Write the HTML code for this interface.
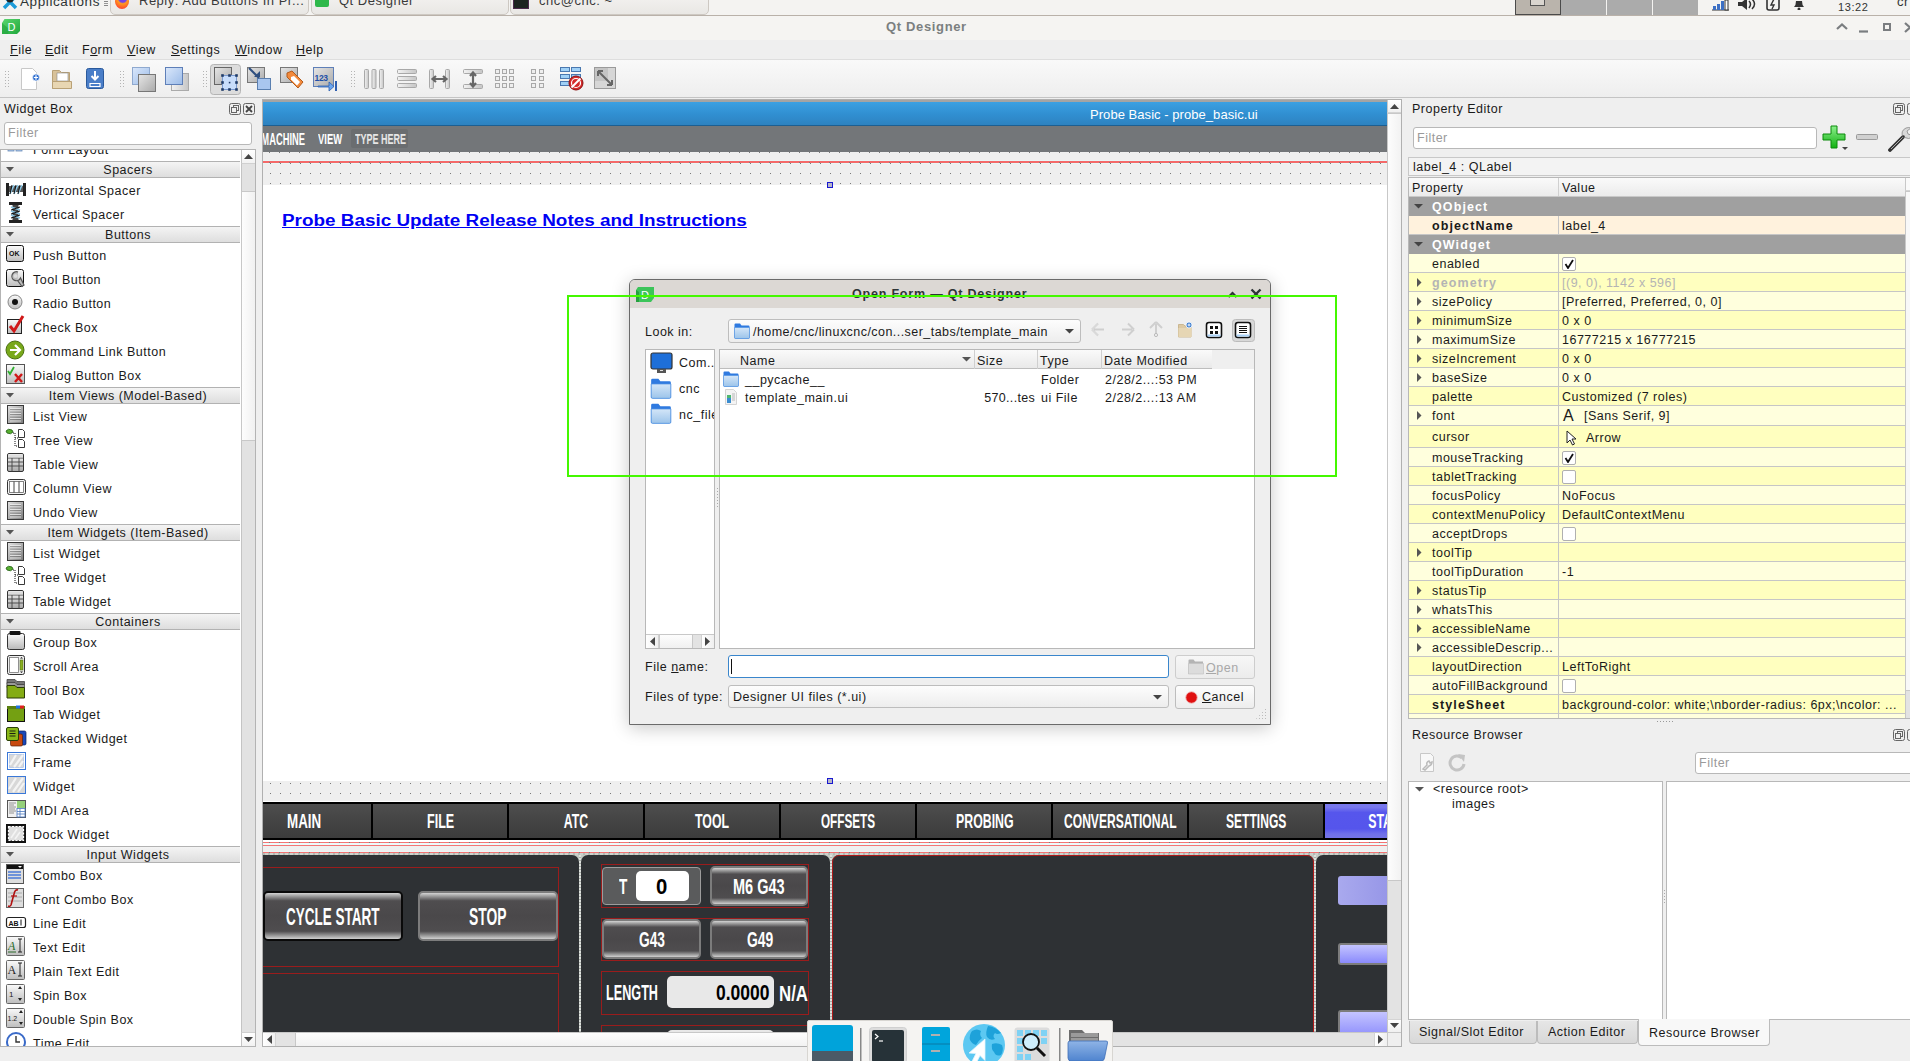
<!DOCTYPE html>
<html><head><meta charset="utf-8">
<style>
*{box-sizing:border-box;margin:0;padding:0}
html,body{width:1910px;height:1061px;overflow:hidden;background:#efefef;font-family:"Liberation Sans",sans-serif;font-size:12.5px;color:#1a1a1a;letter-spacing:0.5px}
.a{position:absolute}
.t{position:absolute;white-space:nowrap;line-height:14px}
.b{font-weight:bold;letter-spacing:1.1px}
.cond{font-weight:bold;letter-spacing:0;transform-origin:0 0;color:#fff}
</style></head><body>

<!-- ============ TASKBAR ============ -->
<div class="a" style="left:0;top:0;width:1910px;height:16px;background:#f4f3f1;border-bottom:1px solid #b9b1a9;overflow:hidden">
  <svg class="a" style="left:2px;top:-6px" width="16" height="16" viewBox="0 0 16 16"><path d="M2 2 L8 8 L14 2 M8 8 L2 14 M8 8 L14 14" stroke="#1c9bd8" stroke-width="3.5" fill="none"/><circle cx="8" cy="5" r="3.5" fill="#222"/></svg>
  <div class="t" style="left:20px;top:-5.5px;font-size:13.5px;color:#2e3436;letter-spacing:0.6px">Applications</div>
  <div class="a" style="left:104px;top:1px;width:4px;height:5px;border-top:1px solid #888;border-bottom:1px solid #888"></div><div class="a" style="left:104px;top:3px;width:4px;height:1px;background:#999"></div>
  <div class="a" style="left:110px;top:-4px;width:199px;height:19px;background:linear-gradient(#f2f1ef,#e9e7e4);border:1px solid #cdc8c2;border-radius:0 0 5px 5px"></div>
  <div class="a" style="left:115px;top:-6px;width:14px;height:15px;border-radius:50%;background:radial-gradient(circle at 55% 30%,#7542e5 0 28%,#ff9a1f 40%,#ff5a2a 70%,#e8226a 100%)"></div>
  <div class="t" style="left:139px;top:-6px;font-size:13px;color:#3a3a3a">Reply: Add Buttons In Pr...</div>
  <div class="a" style="left:311px;top:-4px;width:198px;height:19px;background:linear-gradient(#f2f1ef,#e9e7e4);border:1px solid #cdc8c2;border-radius:0 0 5px 5px"></div>
  <div class="a" style="left:315px;top:-3px;width:14px;height:10px;background:#2eb84a;border-radius:2px"></div>
  <div class="t" style="left:339px;top:-6px;font-size:13px;color:#3a3a3a">Qt Designer</div>
  <div class="a" style="left:510px;top:-4px;width:199px;height:19px;background:linear-gradient(#f2f1ef,#e9e7e4);border:1px solid #cdc8c2;border-radius:0 0 5px 5px"></div>
  <div class="a" style="left:513px;top:-3px;width:16px;height:12px;background:#1c2420;border:1px solid #4a2a4a"></div>
  <div class="t" style="left:539px;top:-6px;font-size:13px;color:#3a3a3a">cnc@cnc: ~</div>
  <div class="a" style="left:1515px;top:0;width:46px;height:15px;background:#bab4ac;border:1px solid #4a4a4a;border-top:none"></div>
  <div class="a" style="left:1530px;top:-2px;width:15px;height:8px;background:#d9d5cf;border:1px solid #555"></div>
  <div class="a" style="left:1561px;top:0;width:45px;height:15px;background:#ababab"></div>
  <div class="a" style="left:1607px;top:0;width:45px;height:15px;background:#ababab"></div>
  <div class="a" style="left:1653px;top:0;width:45px;height:15px;background:#ababab"></div>
  <svg class="a" style="left:1711px;top:0" width="20" height="11"><path d="M1 10h17" stroke="#333"/><rect x="2" y="6" width="3" height="4" fill="#3c6fc4"/><rect x="6" y="4" width="3" height="6" fill="#3c6fc4"/><rect x="10" y="1" width="3" height="9" fill="#3c6fc4"/><rect x="14" y="0" width="3" height="10" fill="#fff" stroke="#333" stroke-width="1"/></svg>
  <svg class="a" style="left:1738px;top:0" width="18" height="10"><path d="M0 2h4l5-4v12l-5-4H0z" fill="#333"/><path d="M11 1q3 3 0 7M14 -1q5 5 0 10" stroke="#333" stroke-width="1.5" fill="none"/></svg>
  <svg class="a" style="left:1766px;top:0" width="14" height="11"><rect x="1" y="-3" width="12" height="13" rx="2" fill="none" stroke="#333" stroke-width="1.6"/><path d="M8 -1L5 5h3l-2 4" stroke="#333" stroke-width="1.4" fill="none"/></svg>
  <svg class="a" style="left:1792px;top:0" width="14" height="10"><path d="M2 7q2-2 2-6h6q0 4 2 6z" fill="#333"/><circle cx="7" cy="9" r="1.5" fill="#333"/></svg>
  <div class="t" style="left:1838px;top:0px;font-size:11px;color:#333;letter-spacing:0.6px">13:22</div>
  <div class="t" style="left:1897px;top:-5px;font-size:13px;color:#333">cr</div>
</div>

<!-- ============ TITLE BAR ============ -->
<div class="a" style="left:0;top:16px;width:1910px;height:24px;background:#f5f4f2">
  <svg class="a" style="left:1px;top:3px" width="20" height="15" viewBox="0 0 20 15"><defs><linearGradient id="dg" x1="0" y1="0" x2="1" y2="1"><stop offset="0" stop-color="#5ad66e"/><stop offset="1" stop-color="#22a83c"/></linearGradient></defs><path d="M3.5 0h15.5v12l-3 3H1V4z" fill="url(#dg)"/><path d="M1 4l7 6-1 5H1z" fill="#26a83e" opacity="0.7"/><text x="6.5" y="12" font-family="Liberation Sans" font-size="11" fill="#fff" letter-spacing="0">D</text></svg>
  <div class="t" style="left:886px;top:4px;font-size:13px;font-weight:bold;color:#7b7f80;letter-spacing:0.65px">Qt Designer</div>
  <svg class="a" style="left:1834px;top:6px" width="76" height="12"><path d="M3 7l5-4.5 5 4.5" stroke="#7a7d80" stroke-width="2.2" fill="none"/><path d="M25 9.5h9" stroke="#7a7d80" stroke-width="2.2"/><rect x="50" y="2" width="6" height="6" stroke="#7a7d80" stroke-width="2" fill="none"/><path d="M71 1l5 4.5-5 4.5" stroke="#7a7d80" stroke-width="2.2" fill="none"/></svg>
</div>

<!-- ============ MENU BAR ============ -->
<div class="a" style="left:0;top:40px;width:1910px;height:20px;background:#efefef;border-bottom:1px solid #dedede">
  <div class="t" style="left:10px;top:3px"><u>F</u>ile</div>
  <div class="t" style="left:45px;top:3px"><u>E</u>dit</div>
  <div class="t" style="left:82px;top:3px">F<u>o</u>rm</div>
  <div class="t" style="left:127px;top:3px"><u>V</u>iew</div>
  <div class="t" style="left:171px;top:3px"><u>S</u>ettings</div>
  <div class="t" style="left:235px;top:3px"><u>W</u>indow</div>
  <div class="t" style="left:296px;top:3px"><u>H</u>elp</div>
</div>

<!-- ============ TOOLBAR ============ -->
<div class="a" id="toolbar" style="left:0;top:60px;width:1910px;height:38px;background:linear-gradient(#f9f9f9,#eeeeee);border-bottom:1px solid #c4c4c4">
<svg class="a" style="left:0;top:0" width="640" height="38" viewBox="0 60 640 38">
 <defs>
  <linearGradient id="gg" x1="0" y1="0" x2="1" y2="1"><stop offset="0" stop-color="#e6e6e6"/><stop offset="1" stop-color="#a9a9a9"/></linearGradient>
  <linearGradient id="gb" x1="0" y1="0" x2="1" y2="1"><stop offset="0" stop-color="#dbe8fb"/><stop offset="1" stop-color="#9bbbe8"/></linearGradient>
  <linearGradient id="gl" x1="0" y1="0" x2="1" y2="0"><stop offset="0" stop-color="#f2f2f2"/><stop offset="1" stop-color="#c6c6c6"/></linearGradient>
  <pattern id="dots" width="3" height="3" patternUnits="userSpaceOnUse"><rect width="1" height="1" fill="#b8b8b8"/></pattern>
 </defs>
 <rect x="5" y="71" width="1" height="1" fill="#b4b4b4"/><rect x="5" y="74" width="1" height="1" fill="#b4b4b4"/><rect x="5" y="77" width="1" height="1" fill="#b4b4b4"/><rect x="5" y="80" width="1" height="1" fill="#b4b4b4"/><rect x="5" y="83" width="1" height="1" fill="#b4b4b4"/><rect x="5" y="86" width="1" height="1" fill="#b4b4b4"/><rect x="8" y="71" width="1" height="1" fill="#b4b4b4"/><rect x="8" y="74" width="1" height="1" fill="#b4b4b4"/><rect x="8" y="77" width="1" height="1" fill="#b4b4b4"/><rect x="8" y="80" width="1" height="1" fill="#b4b4b4"/><rect x="8" y="83" width="1" height="1" fill="#b4b4b4"/><rect x="8" y="86" width="1" height="1" fill="#b4b4b4"/><rect x="120" y="71" width="1" height="1" fill="#b4b4b4"/><rect x="120" y="74" width="1" height="1" fill="#b4b4b4"/><rect x="120" y="77" width="1" height="1" fill="#b4b4b4"/><rect x="120" y="80" width="1" height="1" fill="#b4b4b4"/><rect x="120" y="83" width="1" height="1" fill="#b4b4b4"/><rect x="120" y="86" width="1" height="1" fill="#b4b4b4"/><rect x="123" y="71" width="1" height="1" fill="#b4b4b4"/><rect x="123" y="74" width="1" height="1" fill="#b4b4b4"/><rect x="123" y="77" width="1" height="1" fill="#b4b4b4"/><rect x="123" y="80" width="1" height="1" fill="#b4b4b4"/><rect x="123" y="83" width="1" height="1" fill="#b4b4b4"/><rect x="123" y="86" width="1" height="1" fill="#b4b4b4"/><rect x="203" y="71" width="1" height="1" fill="#b4b4b4"/><rect x="203" y="74" width="1" height="1" fill="#b4b4b4"/><rect x="203" y="77" width="1" height="1" fill="#b4b4b4"/><rect x="203" y="80" width="1" height="1" fill="#b4b4b4"/><rect x="203" y="83" width="1" height="1" fill="#b4b4b4"/><rect x="203" y="86" width="1" height="1" fill="#b4b4b4"/><rect x="206" y="71" width="1" height="1" fill="#b4b4b4"/><rect x="206" y="74" width="1" height="1" fill="#b4b4b4"/><rect x="206" y="77" width="1" height="1" fill="#b4b4b4"/><rect x="206" y="80" width="1" height="1" fill="#b4b4b4"/><rect x="206" y="83" width="1" height="1" fill="#b4b4b4"/><rect x="206" y="86" width="1" height="1" fill="#b4b4b4"/><rect x="351" y="71" width="1" height="1" fill="#b4b4b4"/><rect x="351" y="74" width="1" height="1" fill="#b4b4b4"/><rect x="351" y="77" width="1" height="1" fill="#b4b4b4"/><rect x="351" y="80" width="1" height="1" fill="#b4b4b4"/><rect x="351" y="83" width="1" height="1" fill="#b4b4b4"/><rect x="351" y="86" width="1" height="1" fill="#b4b4b4"/><rect x="354" y="71" width="1" height="1" fill="#b4b4b4"/><rect x="354" y="74" width="1" height="1" fill="#b4b4b4"/><rect x="354" y="77" width="1" height="1" fill="#b4b4b4"/><rect x="354" y="80" width="1" height="1" fill="#b4b4b4"/><rect x="354" y="83" width="1" height="1" fill="#b4b4b4"/><rect x="354" y="86" width="1" height="1" fill="#b4b4b4"/>
 <!-- new -->
 <path d="M21.5 68.5h11l4 4v17h-15z" fill="#fff" stroke="#c8c8c8"/>
 <circle cx="36" cy="77.5" r="3.6" fill="#2f6fcf" stroke="#fff" stroke-width="0.8"/><path d="M33.8 77.5h4.4M36 75.3v4.4" stroke="#fff" stroke-width="1.2"/>
 <!-- open -->
 <path d="M52.5 70.5h7l2 2h8v16h-17z" fill="#d8c29a" stroke="#b9a176"/>
 <rect x="57" y="73" width="11" height="8" fill="#fff" stroke="#888" stroke-width="0.6"/>
 <path d="M52.5 81.5h19v7h-19z" fill="#e8d6b2" stroke="#b9a176"/>
 <!-- save -->
 <rect x="86.5" y="68.5" width="17" height="20" rx="2" fill="#4a7ec8" stroke="#2b5a9c"/>
 <path d="M95 71v8M91.5 76l3.5 3.5 3.5-3.5" stroke="#fff" stroke-width="2" fill="none"/>
 <path d="M90 83.5h10v3h-10z" fill="none" stroke="#fff" stroke-width="1.2"/>
 <!-- bring/send -->
 <rect x="132.5" y="67.5" width="17" height="17" fill="url(#gb)" stroke="#8fa9cf"/>
 <rect x="138.5" y="74.5" width="17" height="17" fill="url(#gg)" stroke="#777"/>
 <rect x="171.5" y="73.5" width="17" height="17" fill="url(#gl)" stroke="#aaa"/>
 <rect x="165.5" y="67.5" width="17" height="17" fill="url(#gb)" stroke="#5e7fb8"/>
 <!-- edit widgets pressed -->
 <rect x="210.5" y="64.5" width="30" height="30" rx="3" fill="#dcdcdc" stroke="#b4b4b4"/>
 <rect x="214.5" y="67.5" width="17" height="17" fill="url(#gg)" stroke="#666"/>
 <rect x="222.5" y="75.5" width="14" height="14" fill="#c8ddfb" stroke="#7a9ad0"/><rect x="221.2" y="74.2" width="2.6" height="2.6" fill="#1e3a66"/><rect x="221.2" y="81.2" width="2.6" height="2.6" fill="#1e3a66"/><rect x="221.2" y="88.2" width="2.6" height="2.6" fill="#1e3a66"/><rect x="228.2" y="74.2" width="2.6" height="2.6" fill="#1e3a66"/><rect x="228.2" y="88.2" width="2.6" height="2.6" fill="#1e3a66"/><rect x="235.2" y="74.2" width="2.6" height="2.6" fill="#1e3a66"/><rect x="235.2" y="81.2" width="2.6" height="2.6" fill="#1e3a66"/><rect x="235.2" y="88.2" width="2.6" height="2.6" fill="#1e3a66"/><rect x="228.8" y="81.8" width="1.6" height="1.6" fill="#1e3a66"/>
 <!-- signals -->
 <rect x="247.5" y="67.5" width="17" height="15" fill="url(#gg)" stroke="#777"/>
 <rect x="257.5" y="78.5" width="13" height="11" fill="#a9c6ef" stroke="#5a7fb0"/>
 <path d="M249 68l10 10" stroke="#2f4f7f" stroke-width="2.2"/><path d="M254 77h6v-6z" fill="#2f4f7f"/>
 <!-- buddies -->
 <rect x="280.5" y="67.5" width="17" height="15" fill="url(#gg)" stroke="#777"/>
 <path d="M287 73l5-2 11 11-5 6-11-11z" fill="#f38a3c" stroke="#b35a1a"/><path d="M291 77l3-1 6 6-3 3.5-6-6z" fill="#fff"/>
 <!-- tab order -->
 <rect x="313.5" y="67.5" width="20" height="19" fill="url(#gg)" stroke="#5e7fb8"/>
 <text x="314.5" y="81" font-family="Liberation Sans" font-size="8.5" font-weight="bold" fill="#1e50a8" letter-spacing="-0.3">123</text>
 <path d="M318 86h11v-4l5 4.5-5 4.5v-4h-11z" fill="#6aa5ef" stroke="#2f5fb0" stroke-width="0.8"/><rect x="335" y="81" width="2" height="10" fill="#2f5fb0"/>
 <!-- hbox -->
 <g fill="url(#gl)" stroke="#a8a8a8"><rect x="364.5" y="69.5" width="4" height="19" rx="1"/><rect x="372" y="69.5" width="4" height="19" rx="1"/><rect x="379.5" y="69.5" width="4" height="19" rx="1"/>
 <rect x="397.5" y="69.5" width="19" height="4" rx="1"/><rect x="397.5" y="76.5" width="19" height="4" rx="1"/><rect x="397.5" y="83.5" width="19" height="4" rx="1"/>
 <rect x="429.5" y="69.5" width="4" height="19" rx="1"/><rect x="445.5" y="69.5" width="4" height="19" rx="1"/>
 <rect x="463.5" y="69.5" width="19" height="4" rx="1"/><rect x="463.5" y="84.5" width="19" height="4" rx="1"/></g>
 <path d="M433 79h13M436 76l-3.5 3 3.5 3M443 76l3.5 3-3.5 3" stroke="#666" stroke-width="2.2" fill="none"/>
 <path d="M473 73v13M470 76l3-3.5 3 3.5M470 83l3 3.5 3-3.5" stroke="#666" stroke-width="2.2" fill="none"/>
 <g fill="#eee" stroke="#a8a8a8"><rect x="495.5" y="69.5" width="4" height="4"/><rect x="502.5" y="69.5" width="4" height="4"/><rect x="509.5" y="69.5" width="4" height="4"/><rect x="495.5" y="76.5" width="4" height="4"/><rect x="502.5" y="76.5" width="4" height="4"/><rect x="509.5" y="76.5" width="4" height="4"/><rect x="495.5" y="83.5" width="4" height="4"/><rect x="502.5" y="83.5" width="4" height="4"/><rect x="509.5" y="83.5" width="4" height="4"/>
 <rect x="531.5" y="69.5" width="4" height="4"/><rect x="539.5" y="69.5" width="4" height="4"/><rect x="531.5" y="76.5" width="4" height="4"/><rect x="539.5" y="76.5" width="4" height="4"/><rect x="531.5" y="83.5" width="4" height="4"/><rect x="539.5" y="83.5" width="4" height="4"/></g>
 <!-- break layout -->
 <g fill="#9fd0f6" stroke="#4a78b0"><rect x="560.5" y="67.5" width="9" height="4"/><rect x="571.5" y="67.5" width="9" height="4"/><rect x="560.5" y="74.5" width="9" height="4"/><rect x="571.5" y="74.5" width="9" height="4"/><rect x="560.5" y="81.5" width="9" height="4"/></g>
 <circle cx="576" cy="83" r="7" fill="#d42a2a" stroke="#8a1010"/><path d="M571.5 87.5l9-9" stroke="#fff" stroke-width="2"/><circle cx="576" cy="83" r="4.5" fill="none" stroke="#fff" stroke-width="1.2"/>
 <!-- adjust size -->
 <rect x="594.5" y="67.5" width="21" height="21" fill="#d6d6d6" stroke="#9a9a9a"/><rect x="595" y="68" width="13" height="13" fill="#c4c4c4"/>
 <path d="M598 71l14 14M598 71h5M598 71v5M612 85h-5M612 85v-5" stroke="#666" stroke-width="2" fill="none"/>
</svg>
</div>

<!-- ============ WIDGET BOX ============ -->
<div class="a" id="wbox" style="left:0;top:98px;width:259px;height:949px;background:#efefef">
  <div class="t" style="left:4px;top:4px">Widget Box</div>
  <svg class="a" style="left:229px;top:5px" width="26" height="12"><rect x="0.5" y="0.5" width="11" height="11" rx="2" fill="none" stroke="#666"/><rect x="4.5" y="2.5" width="5" height="5" fill="none" stroke="#666"/><rect x="2.5" y="4.5" width="5" height="5" fill="#efefef" stroke="#666"/><rect x="14.5" y="0.5" width="11" height="11" rx="2" fill="none" stroke="#666"/><path d="M17 3l6 6M23 3l-6 6" stroke="#444" stroke-width="1.8"/></svg>
  <div class="t" style="left:4px;top:24px;width:248px;height:23px;background:#fff;border:1px solid #b8b8b8;border-radius:3px;padding:3px 0 0 3px;color:#9a9a9a">Filter</div>
</div>
<div class="a" style="left:0;top:149px;width:256px;height:898px;background:#fff;border:1px solid #b4b4b4;overflow:hidden">
 <div class="a" style="left:-1px;top:-150px;width:256px;height:1200px">
<svg class="a" style="left:5px;top:137px" width="22" height="22" viewBox="0 0 22 22"><g fill="#a8c4e8" stroke="#6a8cb8" stroke-width="0.8"><rect x="3" y="1" width="6" height="5"/><rect x="11" y="1" width="6" height="5"/><rect x="3" y="9" width="6" height="5"/><rect x="11" y="9" width="6" height="5"/></g></svg>
<div class="t" style="left:33px;top:143px">Form Layout</div>
<div class="a" style="left:0;top:161px;width:240px;height:17px;background:linear-gradient(#f4f4f4,#dedede);border-top:1px solid #b2b2b2;border-bottom:1px solid #b2b2b2"></div>
<svg class="a" style="left:6px;top:167px" width="8" height="5"><path d="M0 0h8l-4 4.5z" fill="#555"/></svg>
<div class="t" style="left:0;top:163px;width:256px;text-align:center">Spacers</div>
<svg class="a" style="left:5px;top:178px" width="22" height="22" viewBox="0 0 22 22"><rect x="1" y="5" width="3" height="13" fill="#222"/><rect x="18" y="5" width="3" height="13" fill="#222"/><path d="M4 11h14" stroke="#555" stroke-width="6"/><path d="M5 16l4-9M9 16l4-9M13 16l4-9" stroke="#8ac8e8" stroke-width="1.6"/><path d="M7 7l-2 9M11 7l-2 9M15 7l-2 9" stroke="#111" stroke-width="1"/></svg>
<div class="t" style="left:33px;top:184px">Horizontal Spacer</div>
<svg class="a" style="left:5px;top:202px" width="22" height="22" viewBox="0 0 22 22"><rect x="4" y="0" width="13" height="3" fill="#222"/><rect x="4" y="18" width="13" height="3" fill="#222"/><path d="M10.5 3v15" stroke="#444" stroke-width="6"/><path d="M6 5l9 3M6 9l9 3M6 13l9 3" stroke="#8ac8e8" stroke-width="1.6"/><path d="M15 5l-9 3M15 9l-9 3M15 13l-9 3" stroke="#111" stroke-width="1"/></svg>
<div class="t" style="left:33px;top:208px">Vertical Spacer</div>
<div class="a" style="left:0;top:226px;width:240px;height:17px;background:linear-gradient(#f4f4f4,#dedede);border-top:1px solid #b2b2b2;border-bottom:1px solid #b2b2b2"></div>
<svg class="a" style="left:6px;top:232px" width="8" height="5"><path d="M0 0h8l-4 4.5z" fill="#555"/></svg>
<div class="t" style="left:0;top:228px;width:256px;text-align:center">Buttons</div>
<svg class="a" style="left:5px;top:243px" width="22" height="22" viewBox="0 0 22 22"><rect x="1.5" y="2.5" width="17" height="16" rx="2" fill="url(#wg)" stroke="#111"/><text x="4" y="13" font-size="7" font-family="Liberation Sans" font-weight="bold" fill="#111" letter-spacing="0">OK</text></svg>
<div class="t" style="left:33px;top:249px">Push Button</div>
<svg class="a" style="left:5px;top:267px" width="22" height="22" viewBox="0 0 22 22"><rect x="1.5" y="2.5" width="17" height="17" rx="2" fill="url(#wg)" stroke="#111"/><path d="M13 5a4.5 4.5 0 1 0 2.5 6l3.5 7-2 1.5-4.5-6" fill="#bbb" stroke="#555" stroke-width="1.2"/><circle cx="10.5" cy="9" r="2" fill="#ddd"/></svg>
<div class="t" style="left:33px;top:273px">Tool Button</div>
<svg class="a" style="left:5px;top:291px" width="22" height="22" viewBox="0 0 22 22"><circle cx="10" cy="11" r="7" fill="url(#wg)" stroke="#888"/><circle cx="10" cy="11" r="3" fill="#111"/></svg>
<div class="t" style="left:33px;top:297px">Radio Button</div>
<svg class="a" style="left:5px;top:315px" width="22" height="22" viewBox="0 0 22 22"><rect x="2.5" y="4.5" width="14" height="14" fill="url(#wg)" stroke="#222"/><path d="M5 11l4 5 9-15" stroke="#d01818" stroke-width="3" fill="none"/></svg>
<div class="t" style="left:33px;top:321px">Check Box</div>
<svg class="a" style="left:5px;top:339px" width="22" height="22" viewBox="0 0 22 22"><circle cx="10" cy="11" r="9" fill="#78a81a" stroke="#4a7010"/><path d="M5 11h9M10 6l5 5-5 5" stroke="#fff" stroke-width="2.2" fill="none"/></svg>
<div class="t" style="left:33px;top:345px">Command Link Button</div>
<svg class="a" style="left:5px;top:363px" width="22" height="22" viewBox="0 0 22 22"><rect x="1.5" y="1.5" width="18" height="19" fill="url(#wg)" stroke="#555"/><path d="M3 8l2 3 4-7" stroke="#30b030" stroke-width="1.8" fill="none"/><path d="M10 11l7 8M17 11l-7 8" stroke="#d01818" stroke-width="2.4"/></svg>
<div class="t" style="left:33px;top:369px">Dialog Button Box</div>
<div class="a" style="left:0;top:387px;width:240px;height:17px;background:linear-gradient(#f4f4f4,#dedede);border-top:1px solid #b2b2b2;border-bottom:1px solid #b2b2b2"></div>
<svg class="a" style="left:6px;top:393px" width="8" height="5"><path d="M0 0h8l-4 4.5z" fill="#555"/></svg>
<div class="t" style="left:0;top:389px;width:256px;text-align:center">Item Views (Model-Based)</div>
<svg class="a" style="left:5px;top:404px" width="22" height="22" viewBox="0 0 22 22"><defs><linearGradient id="lg1" x1="0" y1="0" x2="1" y2="1"><stop offset="0" stop-color="#e4e4e4"/><stop offset="1" stop-color="#7a7a7a"/></linearGradient></defs><rect x="2.5" y="1.5" width="16" height="18" fill="url(#lg1)" stroke="#3a3a3a"/><path d="M5 4.5h11M5 7h11M5 9.5h11M5 12h11M5 14.5h11M5 17h11" stroke="#f4f4f4" stroke-width="0.9" opacity="0.8"/><path d="M5 5.5h11M5 8h11M5 10.5h11M5 13h11M5 15.5h11" stroke="#5a5a5a" stroke-width="0.6" opacity="0.7"/></svg>
<div class="t" style="left:33px;top:410px">List View</div>
<svg class="a" style="left:5px;top:428px" width="22" height="22" viewBox="0 0 22 22"><path d="M1 3q2-3 6-1l1 2q-2 3-6 1z" fill="#58b030" stroke="#1e5a10" stroke-width="0.8"/><path d="M8 5h2v13h3M10 10h3" stroke="#111" stroke-dasharray="1 1" fill="none"/><path d="M13.5 1.5h4l2 2v6h-6z M13.5 11.5h4l2 2v6h-6z" fill="#fff" stroke="#222" stroke-width="0.9"/></svg>
<div class="t" style="left:33px;top:434px">Tree View</div>
<svg class="a" style="left:5px;top:452px" width="22" height="22" viewBox="0 0 22 22"><defs><linearGradient id="tg1" x1="0" y1="0" x2="0" y2="1"><stop offset="0" stop-color="#f8f8f8"/><stop offset="1" stop-color="#a8a8a8"/></linearGradient></defs><rect x="2.5" y="1.5" width="16" height="18" rx="1.5" fill="url(#tg1)" stroke="#333"/><path d="M2.5 6h16M2.5 10h16M2.5 14h16M7 6v13.5M14 6v13.5" stroke="#444" stroke-width="0.9"/><path d="M3 2.5h15v3h-15z" fill="#ddd"/></svg>
<div class="t" style="left:33px;top:458px">Table View</div>
<svg class="a" style="left:5px;top:476px" width="22" height="22" viewBox="0 0 22 22"><rect x="2.5" y="3.5" width="18" height="15" rx="2" fill="#f4f4f4" stroke="#333"/><rect x="4.5" y="5.5" width="14" height="11" fill="#fff" stroke="#666" stroke-width="0.8"/><path d="M9 5.5v11M14 5.5v11" stroke="#444"/></svg>
<div class="t" style="left:33px;top:482px">Column View</div>
<svg class="a" style="left:5px;top:500px" width="22" height="22" viewBox="0 0 22 22"><defs><linearGradient id="lg1" x1="0" y1="0" x2="1" y2="1"><stop offset="0" stop-color="#e4e4e4"/><stop offset="1" stop-color="#7a7a7a"/></linearGradient></defs><rect x="2.5" y="1.5" width="16" height="18" fill="url(#lg1)" stroke="#3a3a3a"/><path d="M5 4.5h11M5 7h11M5 9.5h11M5 12h11M5 14.5h11M5 17h11" stroke="#f4f4f4" stroke-width="0.9" opacity="0.8"/><path d="M5 5.5h11M5 8h11M5 10.5h11M5 13h11M5 15.5h11" stroke="#5a5a5a" stroke-width="0.6" opacity="0.7"/></svg>
<div class="t" style="left:33px;top:506px">Undo View</div>
<div class="a" style="left:0;top:524px;width:240px;height:17px;background:linear-gradient(#f4f4f4,#dedede);border-top:1px solid #b2b2b2;border-bottom:1px solid #b2b2b2"></div>
<svg class="a" style="left:6px;top:530px" width="8" height="5"><path d="M0 0h8l-4 4.5z" fill="#555"/></svg>
<div class="t" style="left:0;top:526px;width:256px;text-align:center">Item Widgets (Item-Based)</div>
<svg class="a" style="left:5px;top:541px" width="22" height="22" viewBox="0 0 22 22"><defs><linearGradient id="lg1" x1="0" y1="0" x2="1" y2="1"><stop offset="0" stop-color="#e4e4e4"/><stop offset="1" stop-color="#7a7a7a"/></linearGradient></defs><rect x="2.5" y="1.5" width="16" height="18" fill="url(#lg1)" stroke="#3a3a3a"/><path d="M5 4.5h11M5 7h11M5 9.5h11M5 12h11M5 14.5h11M5 17h11" stroke="#f4f4f4" stroke-width="0.9" opacity="0.8"/><path d="M5 5.5h11M5 8h11M5 10.5h11M5 13h11M5 15.5h11" stroke="#5a5a5a" stroke-width="0.6" opacity="0.7"/></svg>
<div class="t" style="left:33px;top:547px">List Widget</div>
<svg class="a" style="left:5px;top:565px" width="22" height="22" viewBox="0 0 22 22"><path d="M1 3q2-3 6-1l1 2q-2 3-6 1z" fill="#58b030" stroke="#1e5a10" stroke-width="0.8"/><path d="M8 5h2v13h3M10 10h3" stroke="#111" stroke-dasharray="1 1" fill="none"/><path d="M13.5 1.5h4l2 2v6h-6z M13.5 11.5h4l2 2v6h-6z" fill="#fff" stroke="#222" stroke-width="0.9"/></svg>
<div class="t" style="left:33px;top:571px">Tree Widget</div>
<svg class="a" style="left:5px;top:589px" width="22" height="22" viewBox="0 0 22 22"><defs><linearGradient id="tg1" x1="0" y1="0" x2="0" y2="1"><stop offset="0" stop-color="#f8f8f8"/><stop offset="1" stop-color="#a8a8a8"/></linearGradient></defs><rect x="2.5" y="1.5" width="16" height="18" rx="1.5" fill="url(#tg1)" stroke="#333"/><path d="M2.5 6h16M2.5 10h16M2.5 14h16M7 6v13.5M14 6v13.5" stroke="#444" stroke-width="0.9"/><path d="M3 2.5h15v3h-15z" fill="#ddd"/></svg>
<div class="t" style="left:33px;top:595px">Table Widget</div>
<div class="a" style="left:0;top:613px;width:240px;height:17px;background:linear-gradient(#f4f4f4,#dedede);border-top:1px solid #b2b2b2;border-bottom:1px solid #b2b2b2"></div>
<svg class="a" style="left:6px;top:619px" width="8" height="5"><path d="M0 0h8l-4 4.5z" fill="#555"/></svg>
<div class="t" style="left:0;top:615px;width:256px;text-align:center">Containers</div>
<svg class="a" style="left:5px;top:630px" width="22" height="22" viewBox="0 0 22 22"><defs><linearGradient id="gg1" x1="0" y1="0" x2="0" y2="1"><stop offset="0" stop-color="#fafafa"/><stop offset="1" stop-color="#b8b8b8"/></linearGradient></defs><rect x="2.5" y="3.5" width="17" height="16" rx="2" fill="url(#gg1)" stroke="#333"/><rect x="4.5" y="1" width="11" height="4" rx="1" fill="#111"/></svg>
<div class="t" style="left:33px;top:636px">Group Box</div>
<svg class="a" style="left:5px;top:654px" width="22" height="22" viewBox="0 0 22 22"><rect x="2.5" y="1.5" width="17" height="19" rx="2" fill="#eee" stroke="#333"/><rect x="4.5" y="3.5" width="9" height="15" fill="#fff" stroke="#777" stroke-width="0.8"/><rect x="15" y="6" width="3" height="10" fill="#8ab020" stroke="#4a6010" stroke-width="0.5"/><path d="M15 4.5l1.5-1.5 1.5 1.5zM15 17.5l1.5 1.5 1.5-1.5z" fill="#222"/></svg>
<div class="t" style="left:33px;top:660px">Scroll Area</div>
<svg class="a" style="left:5px;top:678px" width="22" height="22" viewBox="0 0 22 22"><path d="M2 1.5h8l2 2h7.5v3h-17.5z" fill="#777" stroke="#333" stroke-width="0.7"/><path d="M2 4.5h8l2 2h7.5v3h-17.5z" fill="#9a9a9a" stroke="#333" stroke-width="0.7"/><path d="M2 7.5h8l2 2h7.5v10.5h-17.5z" fill="#84ac14" stroke="#2a3a08" stroke-width="1"/></svg>
<div class="t" style="left:33px;top:684px">Tool Box</div>
<svg class="a" style="left:5px;top:702px" width="22" height="22" viewBox="0 0 22 22"><rect x="2.5" y="4.5" width="17" height="15" fill="#74a012" stroke="#111"/><rect x="2" y="4" width="18" height="3" fill="#5a8010"/><rect x="11" y="3.5" width="4" height="3" fill="#2070e0"/><rect x="15" y="3.5" width="4" height="3" fill="#e02020"/></svg>
<div class="t" style="left:33px;top:708px">Tab Widget</div>
<svg class="a" style="left:5px;top:726px" width="22" height="22" viewBox="0 0 22 22"><rect x="9" y="5" width="12" height="14" rx="1.5" fill="#1a48b8" stroke="#0a2060" stroke-width="0.7"/><rect x="5.5" y="8" width="12" height="12" rx="1.5" fill="#c84a10" stroke="#602008" stroke-width="0.7"/><rect x="1.5" y="1.5" width="12" height="13" rx="1.5" fill="#8ab818" stroke="#2a4008"/><path d="M4.5 5h6M4.5 7.5h6M4.5 10h6" stroke="#111" stroke-width="0.9"/></svg>
<div class="t" style="left:33px;top:732px">Stacked Widget</div>
<svg class="a" style="left:5px;top:750px" width="22" height="22" viewBox="0 0 22 22"><rect x="2.5" y="2.5" width="18" height="17" fill="#fff" stroke="#3a78d8"/><rect x="4.5" y="4.5" width="14" height="13" fill="#d8d8d8" stroke="#9ab8e8" stroke-width="0.6"/><path d="M5 15l6-10M9 17l9-12M14 17l4-6" stroke="#f4f4f4" stroke-width="2.2"/></svg>
<div class="t" style="left:33px;top:756px">Frame</div>
<svg class="a" style="left:5px;top:774px" width="22" height="22" viewBox="0 0 22 22"><rect x="2.5" y="2.5" width="18" height="17" fill="#d8d8d8" stroke="#3a78d8"/><path d="M4 15l7-11M8 18l10-14M13 18l6-9" stroke="#f4f4f4" stroke-width="2.2"/></svg>
<div class="t" style="left:33px;top:780px">Widget</div>
<svg class="a" style="left:5px;top:798px" width="22" height="22" viewBox="0 0 22 22"><rect x="2.5" y="2.5" width="18" height="17" fill="#f0f0f0" stroke="#555"/><path d="M4 5h7M4 7h5M4 9h7M4 11h6M4 13h7M4 15h5" stroke="#888" stroke-width="0.9"/><rect x="12" y="3" width="8" height="7" fill="#94d07a"/><rect x="12" y="10.5" width="8" height="8.5" fill="#fff" stroke="#4a78c0" stroke-width="0.8"/><path d="M12 13.5h8M12 16h8M15 10.5v8.5" stroke="#4a78c0" stroke-width="0.8"/></svg>
<div class="t" style="left:33px;top:804px">MDI Area</div>
<svg class="a" style="left:5px;top:822px" width="22" height="22" viewBox="0 0 22 22"><rect x="1" y="2" width="20" height="19" fill="#111"/><rect x="3.5" y="4.5" width="15" height="14" fill="#e0e0e0" stroke="#fff" stroke-width="1.2" stroke-dasharray="2 1.5"/><path d="M6 16l6-9M10 17l5-7" stroke="#f4f4f4" stroke-width="1.6"/></svg>
<div class="t" style="left:33px;top:828px">Dock Widget</div>
<div class="a" style="left:0;top:846px;width:240px;height:17px;background:linear-gradient(#f4f4f4,#dedede);border-top:1px solid #b2b2b2;border-bottom:1px solid #b2b2b2"></div>
<svg class="a" style="left:6px;top:852px" width="8" height="5"><path d="M0 0h8l-4 4.5z" fill="#555"/></svg>
<div class="t" style="left:0;top:848px;width:256px;text-align:center">Input Widgets</div>
<svg class="a" style="left:5px;top:863px" width="22" height="22" viewBox="0 0 22 22"><rect x="1.5" y="1.5" width="17" height="19" fill="#ddd" stroke="#555"/><rect x="2" y="2" width="16" height="4" fill="#111"/><path d="M13 3h4l-2 2z" fill="#fff"/><path d="M3 9h13M3 12h13M3 15h13" stroke="#4a7ad8" stroke-width="1.6"/></svg>
<div class="t" style="left:33px;top:869px">Combo Box</div>
<svg class="a" style="left:5px;top:887px" width="22" height="22" viewBox="0 0 22 22"><rect x="1.5" y="1.5" width="17" height="19" fill="#ddd" stroke="#666"/><path d="M3 6h14M3 10h14M3 14h14" stroke="#aaa"/><path d="M13 3q-3-1-4 4l-3 11q-1 2-3 1" stroke="#b01010" stroke-width="1.6" fill="none"/><path d="M6 9h6" stroke="#b01010" stroke-width="1.2"/></svg>
<div class="t" style="left:33px;top:893px">Font Combo Box</div>
<svg class="a" style="left:5px;top:911px" width="22" height="22" viewBox="0 0 22 22"><rect x="1.5" y="6.5" width="19" height="10" rx="2" fill="#fff" stroke="#222" stroke-width="1.2"/><text x="3.5" y="14.5" font-size="7" font-weight="bold" font-family="Liberation Sans" letter-spacing="0" fill="#111">AB</text><path d="M16 8.5v6" stroke="#111"/></svg>
<div class="t" style="left:33px;top:917px">Line Edit</div>
<svg class="a" style="left:5px;top:935px" width="22" height="22" viewBox="0 0 22 22"><rect x="1.5" y="1.5" width="18" height="19" rx="1" fill="url(#wg)" stroke="#666"/><text x="3" y="15" font-size="12" font-family="Liberation Serif" font-style="italic" fill="#2a6a2a" letter-spacing="0">A</text><path d="M3 17h8" stroke="#2a6a2a"/><path d="M13 4h4M15 4v13M13 17h4" stroke="#222"/></svg>
<div class="t" style="left:33px;top:941px">Text Edit</div>
<svg class="a" style="left:5px;top:959px" width="22" height="22" viewBox="0 0 22 22"><rect x="1.5" y="1.5" width="18" height="19" rx="1" fill="url(#wg)" stroke="#666"/><text x="2.5" y="15" font-size="12" font-family="Liberation Serif" fill="#222" letter-spacing="0">A</text><path d="M13 4h4M15 4v13M13 17h4" stroke="#222"/></svg>
<div class="t" style="left:33px;top:965px">Plain Text Edit</div>
<svg class="a" style="left:5px;top:983px" width="22" height="22" viewBox="0 0 22 22"><rect x="1.5" y="1.5" width="18" height="19" rx="1" fill="url(#wg)" stroke="#666"/><text x="4" y="14" font-size="8" font-family="Liberation Sans" fill="#222" letter-spacing="0">1</text><path d="M13 6l2-3 2 3zM13 15l2 3 2-3z" fill="#222"/></svg>
<div class="t" style="left:33px;top:989px">Spin Box</div>
<svg class="a" style="left:5px;top:1007px" width="22" height="22" viewBox="0 0 22 22"><rect x="1.5" y="1.5" width="18" height="19" rx="1" fill="url(#wg)" stroke="#666"/><text x="2.5" y="14" font-size="7" font-family="Liberation Sans" fill="#222" letter-spacing="0">1.2</text><path d="M14 6l2-3 2 3zM14 15l2 3 2-3z" fill="#222"/></svg>
<div class="t" style="left:33px;top:1013px">Double Spin Box</div>
<svg class="a" style="left:5px;top:1031px" width="22" height="22" viewBox="0 0 22 22"><circle cx="11" cy="11" r="9" fill="#fff" stroke="#3a6ac8" stroke-width="2"/><path d="M11 5v6h4" stroke="#333" stroke-width="1.4" fill="none"/></svg>
<div class="t" style="left:33px;top:1037px">Time Edit</div>
 </div>
 <div class="a" style="left:240px;top:0;width:15px;height:896px;background:#e2e2e2;border-left:1px solid #c4c4c4"></div>
 <div class="a" style="left:240px;top:0;width:15px;height:14px;background:linear-gradient(#fff,#f2f2f2);border-left:1px solid #c4c4c4;border-bottom:1px solid #d0d0d0"></div>
 <svg class="a" style="left:243px;top:4px" width="9" height="5"><path d="M0 5h9L4.5 0z" fill="#444"/></svg>
 <div class="a" style="left:240px;top:41px;width:15px;height:250px;background:linear-gradient(90deg,#fdfdfd,#f0f0f0);border:1px solid #c8c8c8;border-right:none"></div>
 <div class="a" style="left:240px;top:882px;width:15px;height:14px;background:linear-gradient(#fff,#f2f2f2);border-left:1px solid #c4c4c4;border-top:1px solid #d0d0d0"></div>
 <svg class="a" style="left:243px;top:887px" width="9" height="5"><path d="M0 0h9L4.5 5z" fill="#444"/></svg>
</div>
<svg width="0" height="0" style="position:absolute"><defs><linearGradient id="wg" x1="0" y1="0" x2="0" y2="1"><stop offset="0" stop-color="#fafafa"/><stop offset="1" stop-color="#bdbdbd"/></linearGradient></defs></svg>

<!-- ============ MDI ============ -->
<div class="a" id="mdi" style="left:262px;top:99px;width:1140px;height:948px;background:#fff;border:1px solid #b0b0b0;overflow:hidden">
<div class="a" style="left:-263px;top:-100px;width:1910px;height:1061px">
 <div class="a" style="left:263px;top:100px;width:1124px;height:2px;background:#a4a4a4"></div>
 <div class="a" style="left:263px;top:102px;width:1124px;height:24px;background:linear-gradient(#3ba0e2,#3190d2 50%,#2d82c0);border-bottom:1px solid #1c5f92"></div>
 <div class="t" style="left:1090px;top:107.5px;color:#fff;font-size:13px;letter-spacing:0.05px">Probe Basic - probe_basic.ui</div>
 <div class="a" style="left:263px;top:126px;width:1124px;height:26px;background:#737679"></div>
 <div class="a" style="left:351px;top:129px;width:57px;height:19px;background:#6a6d70;border-radius:2px"></div>
 <div class="t" style="left:304.5px;top:129.7px;font-size:15.6px;line-height:19px;font-weight:bold;letter-spacing:0;color:#fff;transform-origin:100% 0;transform:translateX(-100%) scaleX(0.6)">MACHINE</div><div class="t" style="left:317.7px;top:128.79999999999998px;font-size:15.55px;line-height:19px;font-weight:bold;letter-spacing:0;color:#fff;transform-origin:0 0;transform:scaleX(0.6075)">VIEW</div><div class="t" style="left:354.5px;top:128.79999999999998px;font-size:15.55px;line-height:19px;font-weight:bold;letter-spacing:0;color:#e6e6e6;transform-origin:0 0;transform:scaleX(0.5795)">TYPE HERE</div>
 <div class="a" style="left:263px;top:152px;width:1124px;height:33px;background:#efefef"></div>
 <div class="a" style="left:263px;top:160px;width:1124px;height:4px;background:#eaf6f6"></div>
 <div class="a" style="left:263px;top:161px;width:1124px;height:2px;background:#f46a6a"></div>
 <div class="a" style="left:269px;top:152px;width:1118px;height:1px;background:repeating-linear-gradient(90deg,#7a7a7a 0 1px,transparent 1px 10px)"></div><div class="a" style="left:269px;top:162px;width:1118px;height:1px;background:repeating-linear-gradient(90deg,#7a7a7a 0 1px,transparent 1px 10px)"></div><div class="a" style="left:270px;top:163px;width:1117px;height:1px;background:repeating-linear-gradient(90deg,#7a7a7a 0 1px,transparent 1px 10px)"></div><div class="a" style="left:270px;top:173px;width:1117px;height:1px;background:repeating-linear-gradient(90deg,#7a7a7a 0 1px,transparent 1px 10px)"></div><div class="a" style="left:270px;top:183px;width:1117px;height:1px;background:repeating-linear-gradient(90deg,#7a7a7a 0 1px,transparent 1px 10px)"></div>
 <div class="t" style="left:281.5px;top:212px;font-size:16px;line-height:18px;font-weight:bold;color:#0000f4;letter-spacing:0;text-decoration:underline;transform-origin:0 0;transform:scaleX(1.18)">Probe Basic Update Release Notes and Instructions</div>
 <div class="a" style="left:827px;top:182px;width:6px;height:6px;background:#b8b8c8;border:1px solid #1818d0"></div>
 <div class="a" style="left:263px;top:781px;width:1124px;height:20px;background:#efefef"></div>
 <div class="a" style="left:270px;top:783px;width:1117px;height:1px;background:repeating-linear-gradient(90deg,#7a7a7a 0 1px,transparent 1px 10px)"></div><div class="a" style="left:270px;top:793px;width:1117px;height:1px;background:repeating-linear-gradient(90deg,#7a7a7a 0 1px,transparent 1px 10px)"></div>
 <div class="a" style="left:827px;top:778px;width:6px;height:6px;background:#b8b8c8;border:1px solid #1818d0"></div>
 <div class="a" style="left:263px;top:802px;width:1124px;height:38px;background:#000"></div>
 <div class="a" style="left:237px;top:804px;width:134px;height:34px;background:linear-gradient(#4e4e4e,#444 50%,#3c3c3c)"></div><div class="t" style="left:287.07px;top:807.7px;font-size:21.08px;line-height:25px;font-weight:bold;letter-spacing:0;color:#fff;transform-origin:0 0;transform:scaleX(0.6346)">MAIN</div><div class="a" style="left:373px;top:804px;width:134px;height:34px;background:linear-gradient(#4e4e4e,#444 50%,#3c3c3c)"></div><div class="t" style="left:426.9px;top:807.7px;font-size:21.08px;line-height:25px;font-weight:bold;letter-spacing:0;color:#fff;transform-origin:0 0;transform:scaleX(0.5955)">FILE</div><div class="a" style="left:509px;top:804px;width:134px;height:34px;background:linear-gradient(#4e4e4e,#444 50%,#3c3c3c)"></div><div class="t" style="left:576px;top:808.3px;font-size:21.08px;line-height:25px;font-weight:bold;letter-spacing:0;color:#fff;transform-origin:50% 0;transform:translateX(-50%) scaleX(0.585)">ATC</div><div class="a" style="left:645px;top:804px;width:134px;height:34px;background:linear-gradient(#4e4e4e,#444 50%,#3c3c3c)"></div><div class="t" style="left:712px;top:808.3px;font-size:21.08px;line-height:25px;font-weight:bold;letter-spacing:0;color:#fff;transform-origin:50% 0;transform:translateX(-50%) scaleX(0.585)">TOOL</div><div class="a" style="left:781px;top:804px;width:134px;height:34px;background:linear-gradient(#4e4e4e,#444 50%,#3c3c3c)"></div><div class="t" style="left:821.04px;top:807.7px;font-size:21.08px;line-height:25px;font-weight:bold;letter-spacing:0;color:#fff;transform-origin:0 0;transform:scaleX(0.5562)">OFFSETS</div><div class="a" style="left:917px;top:804px;width:134px;height:34px;background:linear-gradient(#4e4e4e,#444 50%,#3c3c3c)"></div><div class="t" style="left:956.01px;top:807.7px;font-size:21.08px;line-height:25px;font-weight:bold;letter-spacing:0;color:#fff;transform-origin:0 0;transform:scaleX(0.5854)">PROBING</div><div class="a" style="left:1053px;top:804px;width:134px;height:34px;background:linear-gradient(#4e4e4e,#444 50%,#3c3c3c)"></div><div class="t" style="left:1063.63px;top:807.7px;font-size:21.08px;line-height:25px;font-weight:bold;letter-spacing:0;color:#fff;transform-origin:0 0;transform:scaleX(0.5733)">CONVERSATIONAL</div><div class="a" style="left:1189px;top:804px;width:134px;height:34px;background:linear-gradient(#4e4e4e,#444 50%,#3c3c3c)"></div><div class="t" style="left:1225.93px;top:807.7px;font-size:21.08px;line-height:25px;font-weight:bold;letter-spacing:0;color:#fff;transform-origin:0 0;transform:scaleX(0.5721)">SETTINGS</div><div class="a" style="left:1325px;top:804px;width:134px;height:34px;background:linear-gradient(#7a7aec 0%,#7878ee 10%,#5656ec 25%,#5555ec 73%,#7070e8 88%,#7474e6 100%)"></div><div class="t" style="left:1392px;top:808.3px;font-size:21.08px;line-height:25px;font-weight:bold;letter-spacing:0;color:#fff;transform-origin:50% 0;transform:translateX(-50%) scaleX(0.585)">STATUS</div>
 <div class="a" style="left:263px;top:840px;width:1124px;height:15px;background:#efefef"></div>
 <div class="a" style="left:263px;top:840px;width:1124px;height:2px;background:#fff"></div>
 <div class="a" style="left:263px;top:843px;width:1124px;height:2px;background:#ecfafa"></div>
 <div class="a" style="left:263px;top:842px;width:1124px;height:1px;background:#f47474"></div>
 <div class="a" style="left:263px;top:845px;width:1124px;height:1px;background:#f47474"></div>
 <div class="a" style="left:269px;top:842px;width:1118px;height:1px;background:repeating-linear-gradient(90deg,#7a7a7a 0 1px,transparent 1px 10px)"></div>
 <div class="a" style="left:263px;top:851px;width:1124px;height:1px;background:#eaf6f6"></div>
 <div class="a" style="left:263px;top:852px;width:1124px;height:1px;background:#f47474"></div>
 <div class="a" style="left:269px;top:852px;width:1118px;height:1px;background:repeating-linear-gradient(90deg,#7a7a7a 0 1px,transparent 1px 10px)"></div>
 <div class="a" style="left:263px;top:853px;width:1124px;height:2px;background:repeating-linear-gradient(90deg,#b4bab4 0 2px,#ccd2cc 2px 5px)"></div>
 <div class="a" style="left:263px;top:855px;width:1124px;height:177px;background:#2e3134"></div>
 <div class="a" style="left:572px;top:855px;width:16px;height:8px;background:#c4cac4"></div><div class="a" style="left:572px;top:855px;width:7px;height:8px;background:#2e3134;border-top-right-radius:7px"></div><div class="a" style="left:581px;top:855px;width:7px;height:8px;background:#2e3134;border-top-left-radius:7px"></div><div class="a" style="left:823px;top:855px;width:16px;height:8px;background:#c4cac4"></div><div class="a" style="left:823px;top:855px;width:7px;height:8px;background:#2e3134;border-top-right-radius:7px"></div><div class="a" style="left:832px;top:855px;width:7px;height:8px;background:#2e3134;border-top-left-radius:7px"></div><div class="a" style="left:1307px;top:855px;width:16px;height:8px;background:#c4cac4"></div><div class="a" style="left:1307px;top:855px;width:7px;height:8px;background:#2e3134;border-top-right-radius:7px"></div><div class="a" style="left:1316px;top:855px;width:7px;height:8px;background:#2e3134;border-top-left-radius:7px"></div>
 <!-- panel1 -->
 <div class="a" style="left:240px;top:867px;width:319px;height:100px;border:1px solid #9a1c1c"></div>
 <div class="a" style="left:240px;top:973px;width:319px;height:100px;border:1px solid #9a1c1c"></div>
 <div class="a" style="left:263px;top:891px;width:140px;height:50px;border:2px solid #0a0a0a;border-radius:5px;background:linear-gradient(#d4d4d4 0%,#a4a4a4 6%,#4f4d4f 17%,#4a484a 50%,#4f4d4f 83%,#9c9c9c 93%,#d0d0d0 100%)"></div>
 <div class="a" style="left:418px;top:891px;width:140px;height:50px;border:2px solid #7c7c7c;border-radius:5px;background:linear-gradient(#d4d4d4 0%,#a4a4a4 6%,#4f4d4f 17%,#4a484a 50%,#4f4d4f 83%,#9c9c9c 93%,#d0d0d0 100%)"></div>
 <div class="a" style="left:579px;top:855px;width:2px;height:177px;background:repeating-linear-gradient(#dde1dd 0 2px,#a9ada9 2px 3px)"></div>
 <div class="t" style="left:286.44px;top:902.1px;font-size:23.98px;line-height:29px;font-weight:bold;letter-spacing:0;color:#fff;transform-origin:0 0;transform:scaleX(0.5636)">CYCLE START</div><div class="t" style="left:469.42px;top:902.1px;font-size:23.98px;line-height:29px;font-weight:bold;letter-spacing:0;color:#fff;transform-origin:0 0;transform:scaleX(0.5778)">STOP</div>
 <!-- panel2 -->
 <div class="a" style="left:601px;top:864px;width:208px;height:44px;border:1px solid #9a1c1c"></div>
 <div class="a" style="left:602px;top:867px;width:99px;height:38px;background:#5a5b5c;border:1px solid #9c9c9c;border-radius:4px"></div>
 <div class="a" style="left:636px;top:871px;width:53px;height:30px;background:#fff;border-radius:5px"></div>
 <div class="a" style="left:710px;top:866px;width:98px;height:40px;border:2px solid #7c7c7c;border-radius:5px;background:linear-gradient(#d4d4d4 0%,#a4a4a4 6%,#4f4d4f 17%,#4a484a 50%,#4f4d4f 83%,#9c9c9c 93%,#d0d0d0 100%)"></div>
 <div class="a" style="left:601px;top:918px;width:208px;height:43px;border:1px solid #9a1c1c"></div>
 <div class="a" style="left:602px;top:919px;width:99px;height:40px;border:2px solid #7c7c7c;border-radius:5px;background:linear-gradient(#d4d4d4 0%,#a4a4a4 6%,#4f4d4f 17%,#4a484a 50%,#4f4d4f 83%,#9c9c9c 93%,#d0d0d0 100%)"></div>
 <div class="a" style="left:710px;top:919px;width:98px;height:40px;border:2px solid #7c7c7c;border-radius:5px;background:linear-gradient(#d4d4d4 0%,#a4a4a4 6%,#4f4d4f 17%,#4a484a 50%,#4f4d4f 83%,#9c9c9c 93%,#d0d0d0 100%)"></div>
 <div class="a" style="left:601px;top:971px;width:208px;height:44px;border:1px solid #9a1c1c"></div>
 <div class="a" style="left:667px;top:976px;width:107px;height:32px;background:#e8e8e8;border-radius:5px"></div>
 <div class="a" style="left:601px;top:1025px;width:208px;height:44px;border:1px solid #9a1c1c"></div>
 <div class="a" style="left:667px;top:1030px;width:107px;height:32px;background:#e8e8e8;border-radius:5px"></div>
 <div class="t" style="left:619.0px;top:872.7px;font-size:22.09px;line-height:27px;font-weight:bold;letter-spacing:0;color:#fff;transform-origin:0 0;transform:scaleX(0.6154)">T</div><div class="t" style="left:655.88px;top:872.7px;font-size:22.09px;line-height:27px;font-weight:bold;letter-spacing:0;color:#000;transform-origin:0 0;transform:scaleX(0.92)">0</div><div class="t" style="left:733.34px;top:872.7px;font-size:22.09px;line-height:27px;font-weight:bold;letter-spacing:0;color:#fff;transform-origin:0 0;transform:scaleX(0.6571)">M6 G43</div><div class="t" style="left:638.68px;top:925.7px;font-size:22.09px;line-height:27px;font-weight:bold;letter-spacing:0;color:#fff;transform-origin:0 0;transform:scaleX(0.6225)">G43</div><div class="t" style="left:746.69px;top:926px;font-size:22.82px;line-height:27px;font-weight:bold;letter-spacing:0;color:#fff;transform-origin:0 0;transform:scaleX(0.6073)">G49</div><div class="t" style="left:606.42px;top:980.3000000000001px;font-size:21.66px;line-height:26px;font-weight:bold;letter-spacing:0;color:#fff;transform-origin:0 0;transform:scaleX(0.5839)">LENGTH</div><div class="t" style="left:715.69px;top:980.3000000000001px;font-size:21.66px;line-height:26px;font-weight:bold;letter-spacing:0;color:#000;transform-origin:0 0;transform:scaleX(0.8077)">0.0000</div><div class="t" style="left:779.22px;top:981.3000000000001px;font-size:21.66px;line-height:26px;font-weight:bold;letter-spacing:0;color:#fff;transform-origin:0 0;transform:scaleX(0.7778)">N/A</div>
 <div class="a" style="left:830px;top:855px;width:2px;height:177px;background:repeating-linear-gradient(#dde1dd 0 2px,#a9ada9 2px 3px)"></div>
 <!-- panel3 -->
 <div class="a" style="left:832px;top:855px;width:482px;height:200px;border:1px solid #b01a1a;border-radius:7px 7px 0 0"></div>
 <div class="a" style="left:1314px;top:855px;width:2px;height:177px;background:repeating-linear-gradient(#dde1dd 0 2px,#a9ada9 2px 3px)"></div>
 <!-- panel4 buttons -->
 <div class="a" style="left:1338px;top:876px;width:60px;height:29px;border-radius:3px;background:linear-gradient(90deg,#a9a9ee,#9393e6)"></div>
 <div class="a" style="left:1338px;top:943px;width:60px;height:22px;border:2px solid #7c7c7c;border-radius:3px;background:linear-gradient(#c4c4ff,#8a8afc)"></div>
 <div class="a" style="left:1338px;top:1010px;width:60px;height:30px;border:2px solid #7c7c7c;border-radius:3px;background:linear-gradient(#c4c4ff,#8a8afc)"></div>
 <!-- v scrollbar -->
 <div class="a" style="left:1387px;top:100px;width:14px;height:932px;background:#e3e3e3;border-left:1px solid #c8c8c8"></div>
 <div class="a" style="left:1387px;top:100px;width:14px;height:13px;background:linear-gradient(#fff,#f0f0f0);border-left:1px solid #c8c8c8;border-bottom:1px solid #d4d4d4"></div>
 <svg class="a" style="left:1390px;top:104px" width="9" height="5"><path d="M0 5h9L4.5 0z" fill="#444"/></svg>
 <div class="a" style="left:1387px;top:113px;width:14px;height:768px;background:linear-gradient(90deg,#fdfdfd,#f2f2f2);border:1px solid #c8c8c8;border-right:none"></div>
 <div class="a" style="left:1387px;top:1019px;width:14px;height:13px;background:linear-gradient(#fff,#f0f0f0);border-left:1px solid #c8c8c8;border-top:1px solid #d4d4d4"></div>
 <svg class="a" style="left:1390px;top:1023px" width="9" height="5"><path d="M0 0h9L4.5 5z" fill="#444"/></svg>
 <!-- h scrollbar -->
 <div class="a" style="left:263px;top:1032px;width:1124px;height:14px;background:#e3e3e3;border-top:1px solid #c8c8c8"></div>
 <div class="a" style="left:263px;top:1032px;width:13px;height:14px;background:linear-gradient(90deg,#fff,#f0f0f0);border-top:1px solid #c8c8c8;border-right:1px solid #d4d4d4"></div>
 <svg class="a" style="left:267px;top:1035px" width="5" height="9"><path d="M5 0v9L0 4.5z" fill="#444"/></svg>
 <div class="a" style="left:295px;top:1032px;width:810px;height:14px;background:linear-gradient(#fdfdfd,#f2f2f2);border:1px solid #c8c8c8;border-bottom:none"></div>
 <div class="a" style="left:1374px;top:1032px;width:13px;height:14px;background:linear-gradient(90deg,#fff,#f0f0f0);border-top:1px solid #c8c8c8;border-left:1px solid #d4d4d4"></div>
 <svg class="a" style="left:1378px;top:1035px" width="5" height="9"><path d="M0 0v9L5 4.5z" fill="#444"/></svg>
 <div class="a" style="left:1387px;top:1032px;width:14px;height:14px;background:#efefef;border-top:1px solid #c8c8c8;border-left:1px solid #c8c8c8"></div>
</div>
</div>

<!-- ============ RIGHT DOCKS ============ -->
<div class="a" id="rdock" style="left:1402px;top:98px;width:508px;height:949px;background:#efefef"></div>
<div class="t" style="left:1412px;top:102px">Property Editor</div>
<svg class="a" style="left:1893px;top:103px" width="17" height="12"><rect x="0.5" y="0.5" width="11" height="11" rx="2" fill="none" stroke="#666"/><rect x="4.5" y="2.5" width="5" height="5" fill="none" stroke="#666"/><rect x="2.5" y="4.5" width="5" height="5" fill="#efefef" stroke="#666"/><rect x="14.5" y="0.5" width="11" height="11" rx="2" fill="none" stroke="#666"/></svg>
<div class="t" style="left:1413px;top:127px;width:404px;height:22px;background:#fff;border:1px solid #b8b8b8;border-radius:3px;padding:3px 0 0 3px;color:#9a9a9a">Filter</div>
<svg class="a" style="left:1820px;top:124px" width="90" height="28">
 <defs><linearGradient id="pg" x1="0" y1="0" x2="0" y2="1"><stop offset="0" stop-color="#8cf08c"/><stop offset="1" stop-color="#10b010"/></linearGradient></defs>
 <path d="M11 2h6v8h8v6h-8v8h-6v-8H3v-6h8z" fill="url(#pg)" stroke="#0a8a0a" stroke-width="1"/>
 <path d="M22 23h6l-3 3z" fill="#444"/>
 <rect x="36.5" y="10.5" width="21" height="5" rx="1" fill="#d0d0d0" stroke="#9a9a9a"/>
 <path d="M70 26l14-14" stroke="#333" stroke-width="3.8" stroke-linecap="round"/><path d="M71 25l12-12" stroke="#aaa" stroke-width="1"/>
 <path d="M83 13q-3-6 3-9q3-1 5 0l-4 3 1 3 3 1 3-4q1 3-1 6q-4 3-10 0z" fill="#d8d8d8" stroke="#888" stroke-width="0.8"/><circle cx="83.5" cy="12.5" r="1.2" fill="#333"/>
</svg>
<div class="t" style="left:1408px;top:157px;width:510px;height:19px;background:#f3f3f3;border:1px solid #c8c8c8;padding:2px 0 0 4px">label_4 : QLabel</div>
<div class="a" style="left:1408px;top:177px;width:502px;height:542px;background:#fff;border:1px solid #b8b8b8;overflow:hidden"></div>
<div class="a" style="left:1409px;top:178px;width:496px;height:19px;background:linear-gradient(#fafafa,#ebebeb);border-bottom:1px solid #c8c8c8"></div>
<div class="a" style="left:1558px;top:178px;width:1px;height:18px;background:#d0d0d0"></div>
<div class="t" style="left:1412px;top:181px">Property</div>
<div class="t" style="left:1562px;top:181px">Value</div>
<div class="a" style="left:1409px;top:197px;width:496px;height:521px;overflow:hidden"><div class="a" style="left:-1409px;top:-197px;width:1910px;height:1061px">
<div class="a" style="left:1409px;top:197px;width:496px;height:19px;background:#a0a0a0"></div>
<div class="t b" style="left:1432px;top:199.8px;color:#fff">QObject</div>
<svg class="a" style="left:1414px;top:204px" width="9" height="5"><path d="M0 0h9L4.5 4.5z" fill="#444"/></svg>
<div class="a" style="left:1409px;top:216px;width:496px;height:19px;background:#fff2dd;border-bottom:1px solid #c6c6c6"></div>
<div class="a" style="left:1558px;top:216px;width:1px;height:19px;background:#c6c6c6"></div>
<div class="t b" style="left:1432px;top:218.8px;">objectName</div>
<div class="t" style="left:1562px;top:218.8px;">label_4</div>
<div class="a" style="left:1409px;top:235px;width:496px;height:19px;background:#a0a0a0"></div>
<div class="t b" style="left:1432px;top:237.8px;color:#fff">QWidget</div>
<svg class="a" style="left:1414px;top:242px" width="9" height="5"><path d="M0 0h9L4.5 4.5z" fill="#444"/></svg>
<div class="a" style="left:1409px;top:254px;width:496px;height:19px;background:#ffffdd;border-bottom:1px solid #c6c6c6"></div>
<div class="a" style="left:1558px;top:254px;width:1px;height:19px;background:#c6c6c6"></div>
<div class="t" style="left:1432px;top:256.8px;">enabled</div>
<div class="a" style="left:1562px;top:257px;width:14px;height:14px;background:#fff;border:1px solid #b0b0b0;border-radius:2px"></div><svg class="a" style="left:1564px;top:259px" width="10" height="10"><path d="M1.5 5l2.5 4 5-8" stroke="#111" stroke-width="1.8" fill="none"/></svg>
<div class="a" style="left:1409px;top:273px;width:496px;height:19px;background:#ffffbf;border-bottom:1px solid #c6c6c6"></div>
<div class="a" style="left:1558px;top:273px;width:1px;height:19px;background:#c6c6c6"></div>
<div class="t b" style="left:1432px;top:275.8px;color:#b4b4b4;">geometry</div>
<div class="t" style="left:1562px;top:275.8px;color:#b4b4b4;">[(9, 0), 1142 x 596]</div>
<svg class="a" style="left:1417px;top:278px" width="5" height="9"><path d="M0 0v9l4.5-4.5z" fill="#555"/></svg>
<div class="a" style="left:1409px;top:292px;width:496px;height:19px;background:#ffffdd;border-bottom:1px solid #c6c6c6"></div>
<div class="a" style="left:1558px;top:292px;width:1px;height:19px;background:#c6c6c6"></div>
<div class="t" style="left:1432px;top:294.8px;">sizePolicy</div>
<div class="t" style="left:1562px;top:294.8px;">[Preferred, Preferred, 0, 0]</div>
<svg class="a" style="left:1417px;top:297px" width="5" height="9"><path d="M0 0v9l4.5-4.5z" fill="#555"/></svg>
<div class="a" style="left:1409px;top:311px;width:496px;height:19px;background:#ffffbf;border-bottom:1px solid #c6c6c6"></div>
<div class="a" style="left:1558px;top:311px;width:1px;height:19px;background:#c6c6c6"></div>
<div class="t" style="left:1432px;top:313.8px;">minimumSize</div>
<div class="t" style="left:1562px;top:313.8px;">0 x 0</div>
<svg class="a" style="left:1417px;top:316px" width="5" height="9"><path d="M0 0v9l4.5-4.5z" fill="#555"/></svg>
<div class="a" style="left:1409px;top:330px;width:496px;height:19px;background:#ffffdd;border-bottom:1px solid #c6c6c6"></div>
<div class="a" style="left:1558px;top:330px;width:1px;height:19px;background:#c6c6c6"></div>
<div class="t" style="left:1432px;top:332.8px;">maximumSize</div>
<div class="t" style="left:1562px;top:332.8px;">16777215 x 16777215</div>
<svg class="a" style="left:1417px;top:335px" width="5" height="9"><path d="M0 0v9l4.5-4.5z" fill="#555"/></svg>
<div class="a" style="left:1409px;top:349px;width:496px;height:19px;background:#ffffbf;border-bottom:1px solid #c6c6c6"></div>
<div class="a" style="left:1558px;top:349px;width:1px;height:19px;background:#c6c6c6"></div>
<div class="t" style="left:1432px;top:351.8px;">sizeIncrement</div>
<div class="t" style="left:1562px;top:351.8px;">0 x 0</div>
<svg class="a" style="left:1417px;top:354px" width="5" height="9"><path d="M0 0v9l4.5-4.5z" fill="#555"/></svg>
<div class="a" style="left:1409px;top:368px;width:496px;height:19px;background:#ffffdd;border-bottom:1px solid #c6c6c6"></div>
<div class="a" style="left:1558px;top:368px;width:1px;height:19px;background:#c6c6c6"></div>
<div class="t" style="left:1432px;top:370.8px;">baseSize</div>
<div class="t" style="left:1562px;top:370.8px;">0 x 0</div>
<svg class="a" style="left:1417px;top:373px" width="5" height="9"><path d="M0 0v9l4.5-4.5z" fill="#555"/></svg>
<div class="a" style="left:1409px;top:387px;width:496px;height:19px;background:#ffffbf;border-bottom:1px solid #c6c6c6"></div>
<div class="a" style="left:1558px;top:387px;width:1px;height:19px;background:#c6c6c6"></div>
<div class="t" style="left:1432px;top:389.8px;">palette</div>
<div class="t" style="left:1562px;top:389.8px;">Customized (7 roles)</div>
<div class="a" style="left:1409px;top:406px;width:496px;height:20px;background:#ffffdd;border-bottom:1px solid #c6c6c6"></div>
<div class="a" style="left:1558px;top:406px;width:1px;height:20px;background:#c6c6c6"></div>
<div class="t" style="left:1432px;top:409.3px;">font</div>
<div class="t" style="left:1563px;top:407px;font-size:16px;line-height:18px;letter-spacing:0">A</div><div class="t" style="left:1584px;top:409px">[Sans Serif, 9]</div>
<svg class="a" style="left:1417px;top:411px" width="5" height="9"><path d="M0 0v9l4.5-4.5z" fill="#555"/></svg>
<div class="a" style="left:1409px;top:426px;width:496px;height:22px;background:#ffffbf;border-bottom:1px solid #c6c6c6"></div>
<div class="a" style="left:1558px;top:426px;width:1px;height:22px;background:#c6c6c6"></div>
<div class="t" style="left:1432px;top:430.3px;">cursor</div>
<svg class="a" style="left:1566px;top:430px" width="12" height="16"><path d="M1 1v12l3-3 2.5 5 2-1-2.5-5h4z" fill="#fff" stroke="#222" stroke-width="1"/></svg><div class="t" style="left:1586px;top:430.6px">Arrow</div>
<div class="a" style="left:1409px;top:448px;width:496px;height:19px;background:#ffffdd;border-bottom:1px solid #c6c6c6"></div>
<div class="a" style="left:1558px;top:448px;width:1px;height:19px;background:#c6c6c6"></div>
<div class="t" style="left:1432px;top:450.8px;">mouseTracking</div>
<div class="a" style="left:1562px;top:451px;width:14px;height:14px;background:#fff;border:1px solid #b0b0b0;border-radius:2px"></div><svg class="a" style="left:1564px;top:453px" width="10" height="10"><path d="M1.5 5l2.5 4 5-8" stroke="#111" stroke-width="1.8" fill="none"/></svg>
<div class="a" style="left:1409px;top:467px;width:496px;height:19px;background:#ffffbf;border-bottom:1px solid #c6c6c6"></div>
<div class="a" style="left:1558px;top:467px;width:1px;height:19px;background:#c6c6c6"></div>
<div class="t" style="left:1432px;top:469.8px;">tabletTracking</div>
<div class="a" style="left:1562px;top:470px;width:14px;height:14px;background:#fff;border:1px solid #b0b0b0;border-radius:2px"></div>
<div class="a" style="left:1409px;top:486px;width:496px;height:19px;background:#ffffdd;border-bottom:1px solid #c6c6c6"></div>
<div class="a" style="left:1558px;top:486px;width:1px;height:19px;background:#c6c6c6"></div>
<div class="t" style="left:1432px;top:488.8px;">focusPolicy</div>
<div class="t" style="left:1562px;top:488.8px;">NoFocus</div>
<div class="a" style="left:1409px;top:505px;width:496px;height:19px;background:#ffffbf;border-bottom:1px solid #c6c6c6"></div>
<div class="a" style="left:1558px;top:505px;width:1px;height:19px;background:#c6c6c6"></div>
<div class="t" style="left:1432px;top:507.8px;">contextMenuPolicy</div>
<div class="t" style="left:1562px;top:507.8px;">DefaultContextMenu</div>
<div class="a" style="left:1409px;top:524px;width:496px;height:19px;background:#ffffdd;border-bottom:1px solid #c6c6c6"></div>
<div class="a" style="left:1558px;top:524px;width:1px;height:19px;background:#c6c6c6"></div>
<div class="t" style="left:1432px;top:526.8px;">acceptDrops</div>
<div class="a" style="left:1562px;top:527px;width:14px;height:14px;background:#fff;border:1px solid #b0b0b0;border-radius:2px"></div>
<div class="a" style="left:1409px;top:543px;width:496px;height:19px;background:#ffffbf;border-bottom:1px solid #c6c6c6"></div>
<div class="a" style="left:1558px;top:543px;width:1px;height:19px;background:#c6c6c6"></div>
<div class="t" style="left:1432px;top:545.8px;">toolTip</div>
<svg class="a" style="left:1417px;top:548px" width="5" height="9"><path d="M0 0v9l4.5-4.5z" fill="#555"/></svg>
<div class="a" style="left:1409px;top:562px;width:496px;height:19px;background:#ffffdd;border-bottom:1px solid #c6c6c6"></div>
<div class="a" style="left:1558px;top:562px;width:1px;height:19px;background:#c6c6c6"></div>
<div class="t" style="left:1432px;top:564.8px;">toolTipDuration</div>
<div class="t" style="left:1562px;top:564.8px;">-1</div>
<div class="a" style="left:1409px;top:581px;width:496px;height:19px;background:#ffffbf;border-bottom:1px solid #c6c6c6"></div>
<div class="a" style="left:1558px;top:581px;width:1px;height:19px;background:#c6c6c6"></div>
<div class="t" style="left:1432px;top:583.8px;">statusTip</div>
<svg class="a" style="left:1417px;top:586px" width="5" height="9"><path d="M0 0v9l4.5-4.5z" fill="#555"/></svg>
<div class="a" style="left:1409px;top:600px;width:496px;height:19px;background:#ffffdd;border-bottom:1px solid #c6c6c6"></div>
<div class="a" style="left:1558px;top:600px;width:1px;height:19px;background:#c6c6c6"></div>
<div class="t" style="left:1432px;top:602.8px;">whatsThis</div>
<svg class="a" style="left:1417px;top:605px" width="5" height="9"><path d="M0 0v9l4.5-4.5z" fill="#555"/></svg>
<div class="a" style="left:1409px;top:619px;width:496px;height:19px;background:#ffffbf;border-bottom:1px solid #c6c6c6"></div>
<div class="a" style="left:1558px;top:619px;width:1px;height:19px;background:#c6c6c6"></div>
<div class="t" style="left:1432px;top:621.8px;">accessibleName</div>
<svg class="a" style="left:1417px;top:624px" width="5" height="9"><path d="M0 0v9l4.5-4.5z" fill="#555"/></svg>
<div class="a" style="left:1409px;top:638px;width:496px;height:19px;background:#ffffdd;border-bottom:1px solid #c6c6c6"></div>
<div class="a" style="left:1558px;top:638px;width:1px;height:19px;background:#c6c6c6"></div>
<div class="t" style="left:1432px;top:640.8px;">accessibleDescrip...</div>
<svg class="a" style="left:1417px;top:643px" width="5" height="9"><path d="M0 0v9l4.5-4.5z" fill="#555"/></svg>
<div class="a" style="left:1409px;top:657px;width:496px;height:19px;background:#ffffbf;border-bottom:1px solid #c6c6c6"></div>
<div class="a" style="left:1558px;top:657px;width:1px;height:19px;background:#c6c6c6"></div>
<div class="t" style="left:1432px;top:659.8px;">layoutDirection</div>
<div class="t" style="left:1562px;top:659.8px;">LeftToRight</div>
<div class="a" style="left:1409px;top:676px;width:496px;height:19px;background:#ffffdd;border-bottom:1px solid #c6c6c6"></div>
<div class="a" style="left:1558px;top:676px;width:1px;height:19px;background:#c6c6c6"></div>
<div class="t" style="left:1432px;top:678.8px;">autoFillBackground</div>
<div class="a" style="left:1562px;top:679px;width:14px;height:14px;background:#fff;border:1px solid #b0b0b0;border-radius:2px"></div>
<div class="a" style="left:1409px;top:695px;width:496px;height:19px;background:#ffffbf;border-bottom:1px solid #c6c6c6"></div>
<div class="a" style="left:1558px;top:695px;width:1px;height:19px;background:#c6c6c6"></div>
<div class="t b" style="left:1432px;top:697.8px;">styleSheet</div>
<div class="t" style="left:1562px;top:697.8px;">background-color: white;\nborder-radius: 6px;\ncolor: ...</div>
<div class="a" style="left:1409px;top:714px;width:496px;height:19px;background:#ffffdd;border-bottom:1px solid #c6c6c6"></div>
<div class="a" style="left:1558px;top:714px;width:1px;height:19px;background:#c6c6c6"></div>
</div></div>
<div class="a" style="left:1905px;top:178px;width:5px;height:540px;background:#e3e3e3;border-left:1px solid #c8c8c8"></div>
<div class="a" style="left:1905px;top:178px;width:5px;height:13px;background:#fafafa;border-left:1px solid #c8c8c8;border-bottom:1px solid #d4d4d4"></div>
<div class="a" style="left:1905px;top:191px;width:5px;height:500px;background:#f8f8f8;border:1px solid #c8c8c8;border-right:none"></div>
<div class="a" style="left:1657px;top:721px;width:16px;height:1px;background:repeating-linear-gradient(90deg,#999 0 1px,transparent 1px 3px)"></div>

<div class="t" style="left:1412px;top:727.5px">Resource Browser</div>
<svg class="a" style="left:1893px;top:729px" width="17" height="12"><rect x="0.5" y="0.5" width="11" height="11" rx="2" fill="none" stroke="#666"/><rect x="4.5" y="2.5" width="5" height="5" fill="none" stroke="#666"/><rect x="2.5" y="4.5" width="5" height="5" fill="#efefef" stroke="#666"/><rect x="14.5" y="0.5" width="11" height="11" rx="2" fill="none" stroke="#666"/></svg>
<svg class="a" style="left:1418px;top:752px" width="52" height="22">
 <path d="M2.5 1.5h10l3 3v15h-13z" fill="#f8f8f8" stroke="#c8c8c8"/><path d="M5 17l4-4q-1-3 2-4l1 2 2-1q0 3-3 4l-4 4z" fill="none" stroke="#bbb" stroke-width="1.5"/>
 <path d="M44 6a7 7 0 1 0 2 6" stroke="#c4c4c4" stroke-width="3" fill="none"/><path d="M40 2l7 1-1 7z" fill="#c4c4c4"/>
</svg>
<div class="t" style="left:1695px;top:752px;width:220px;height:22px;background:#fff;border:1px solid #b8b8b8;border-radius:3px;padding:3px 0 0 3px;color:#9a9a9a">Filter</div>
<div class="a" style="left:1408px;top:781px;width:255px;height:239px;background:#fff;border:1px solid #b8b8b8"></div>
<div class="a" style="left:1666px;top:781px;width:250px;height:239px;background:#fff;border:1px solid #b8b8b8"></div>
<svg class="a" style="left:1415px;top:787px" width="9" height="5"><path d="M0 0h9L4.5 4.5z" fill="#555"/></svg>
<div class="t" style="left:1433px;top:782px">&lt;resource root&gt;</div>
<div class="t" style="left:1452px;top:797px">images</div>
<div class="a" style="left:1664px;top:890px;width:1px;height:14px;background:repeating-linear-gradient(#aaa 0 1px,transparent 1px 3px)"></div>
<div class="a" style="left:1409px;top:1021px;width:128px;height:23px;background:linear-gradient(#e6e6e6,#d8d8d8);border:1px solid #bcbcbc;border-top:none;border-radius:0 0 4px 4px"></div>
<div class="t" style="left:1419px;top:1025px">Signal/Slot Editor</div>
<div class="a" style="left:1537px;top:1021px;width:101px;height:23px;background:linear-gradient(#e6e6e6,#d8d8d8);border:1px solid #bcbcbc;border-top:none;border-radius:0 0 4px 4px"></div>
<div class="t" style="left:1548px;top:1025px">Action Editor</div>
<div class="a" style="left:1638px;top:1019px;width:132px;height:27px;background:#f8f8f8;border:1px solid #bcbcbc;border-top:none;border-radius:0 0 4px 4px"></div>
<div class="t" style="left:1649px;top:1026px">Resource Browser</div>

<!-- ============ DIALOG ============ -->
<div class="a" style="left:629px;top:279px;width:642px;height:446px;border:1px solid #6a6a6a;border-radius:6px 6px 0 0;background:#efefef;box-shadow:0 3px 18px rgba(0,0,0,0.22)"></div>
<div class="a" style="left:630px;top:280px;width:640px;height:28px;background:#dcd8d4;border-radius:5px 5px 0 0"></div>
<svg class="a" style="left:635px;top:287px" width="20" height="15" viewBox="0 0 20 15"><path d="M3 0h16v11l-3 4H1V3z" fill="#3cc45a"/><path d="M1 3l3 2v10H1z" fill="#26a040"/><text x="6" y="12" font-family="Liberation Sans" font-size="11" fill="#fff">D</text></svg>
<div class="t b" style="left:852px;top:287px;font-size:12.5px;color:#2e3436;letter-spacing:0.8px">Open Form — Qt Designer</div>
<svg class="a" style="left:1226px;top:288px" width="36" height="13"><path d="M2.5 9l4-4 4 4" stroke="#2e3436" stroke-width="2.2" fill="none"/><path d="M25.5 1.5l9 9M34.5 1.5l-9 9" stroke="#2e3436" stroke-width="2.4"/></svg>
<div class="t" style="left:645px;top:325px">Look in:</div>
<div class="a" style="left:728px;top:319px;width:353px;height:24px;border:1px solid #bdbdbd;border-radius:3px;background:linear-gradient(#fdfdfd,#ededed)"></div>
<svg class="a" style="left:734px;top:323px" width="16" height="16" viewBox="0 0 16 16"><defs><linearGradient id="fg734323" x1="0" y1="0" x2="0" y2="1"><stop offset="0" stop-color="#d4e6f8"/><stop offset="1" stop-color="#9cc4ea"/></linearGradient></defs><path d="M0.5 1.5q0-1 1-1h4.5l1.5 2h7q1 0 1 1v11q0 1-1 1h-13q-1 0-1-1z" fill="#2f7ae0"/><path d="M0.5 4.5h15v10q0 1-1 1h-13q-1 0-1-1z" fill="url(#fg734323)" stroke="#4a8ee0" stroke-width="0.6"/></svg>
<div class="t" style="left:753px;top:325px;letter-spacing:0.45px">/home/cnc/linuxcnc/con...ser_tabs/template_main</div>
<svg class="a" style="left:1065px;top:329px" width="9" height="5"><path d="M0 0h9L4.5 4.5z" fill="#444"/></svg>
<svg class="a" style="left:1088px;top:318px" width="170" height="26">
 <path d="M4 11.5l6-6M4 11.5l6 6M6 11.5h10" stroke="#cfcfcf" stroke-width="2" fill="none"/><path d="M4 11.5l6-6M4 11.5l6 6" stroke="#e8e8e8" stroke-width="0.8" fill="none"/>
 <path d="M46 11.5l-6-6M46 11.5l-6 6M44 11.5H34" stroke="#cfcfcf" stroke-width="2" fill="none"/>
 <path d="M68 4l-6 6M68 4l6 6M68 6v10" stroke="#cfcfcf" stroke-width="2" fill="none"/><circle cx="68" cy="17" r="1.6" fill="none" stroke="#bbb"/>
 <path d="M90.5 6.5h5l1.5 1.5h6v11h-12.5z" fill="#dcc9a4" stroke="#c4ad82" stroke-width="0.8"/><path d="M90.5 10h13v9h-13z" fill="#e6d6b4"/><circle cx="101" cy="7" r="3" fill="#3f7fd0" stroke="#fff" stroke-width="0.8"/><path d="M99.5 7h3M101 5.5v3" stroke="#fff" stroke-width="0.9"/>
 <rect x="118.5" y="4.5" width="15" height="15" rx="2.5" fill="#fff" stroke="#111" stroke-width="1.6"/><rect x="122" y="8" width="3" height="3" fill="#111"/><rect x="127" y="8" width="3" height="3" fill="#111"/><rect x="122" y="13" width="3" height="3" fill="#111"/><rect x="127" y="13" width="3" height="3" fill="#111"/><path d="M119.5 17.5h13" stroke="#a9d0f5" stroke-width="2"/>
 <rect x="144.5" y="1.5" width="22" height="22" rx="3" fill="#d8d8d8" stroke="#bcbcbc"/>
 <rect x="147.5" y="4.5" width="15" height="15" rx="2.5" fill="#fff" stroke="#111" stroke-width="1.6"/><path d="M151 8.5h8M151 10.5h8M151 12.5h8M151 14.5h8" stroke="#111" stroke-width="1"/><path d="M148.5 17.5h13" stroke="#a9d0f5" stroke-width="2"/>
</svg>
<div class="a" style="left:645px;top:349px;width:70px;height:300px;background:#fff;border:1px solid #b8b8b8"></div>
<svg class="a" style="left:650px;top:352px" width="23" height="23"><rect x="1" y="1" width="21" height="16" rx="2" fill="#1e6fd9" stroke="#333" stroke-width="1.2"/><rect x="7" y="17" width="9" height="4" fill="#555"/><rect x="10" y="18" width="3" height="1" fill="#ddd"/></svg>
<div class="t" style="left:679px;top:356px;width:35px;overflow:hidden">Com..</div>
<svg class="a" style="left:650px;top:378px" width="22" height="21" viewBox="0 0 16 16"><defs><linearGradient id="fg650378" x1="0" y1="0" x2="0" y2="1"><stop offset="0" stop-color="#d4e6f8"/><stop offset="1" stop-color="#9cc4ea"/></linearGradient></defs><path d="M0.5 1.5q0-1 1-1h4.5l1.5 2h7q1 0 1 1v11q0 1-1 1h-13q-1 0-1-1z" fill="#2f7ae0"/><path d="M0.5 4.5h15v10q0 1-1 1h-13q-1 0-1-1z" fill="url(#fg650378)" stroke="#4a8ee0" stroke-width="0.6"/></svg>
<div class="t" style="left:679px;top:382px">cnc</div>
<svg class="a" style="left:650px;top:403px" width="22" height="21" viewBox="0 0 16 16"><defs><linearGradient id="fg650403" x1="0" y1="0" x2="0" y2="1"><stop offset="0" stop-color="#d4e6f8"/><stop offset="1" stop-color="#9cc4ea"/></linearGradient></defs><path d="M0.5 1.5q0-1 1-1h4.5l1.5 2h7q1 0 1 1v11q0 1-1 1h-13q-1 0-1-1z" fill="#2f7ae0"/><path d="M0.5 4.5h15v10q0 1-1 1h-13q-1 0-1-1z" fill="url(#fg650403)" stroke="#4a8ee0" stroke-width="0.6"/></svg>
<div class="t" style="left:679px;top:408px;width:35px;overflow:hidden">nc_files</div>
<div class="a" style="left:646px;top:634px;width:68px;height:14px;background:#e3e3e3;border-top:1px solid #c8c8c8"></div>
<div class="a" style="left:646px;top:634px;width:13px;height:14px;background:linear-gradient(90deg,#fff,#efefef);border-top:1px solid #c8c8c8;border-right:1px solid #d0d0d0"></div>
<svg class="a" style="left:650px;top:637px" width="5" height="9"><path d="M5 0v9L0 4.5z" fill="#444"/></svg>
<div class="a" style="left:659px;top:634px;width:34px;height:14px;background:linear-gradient(#fdfdfd,#f0f0f0);border:1px solid #c8c8c8;border-bottom:none"></div>
<div class="a" style="left:701px;top:634px;width:13px;height:14px;background:linear-gradient(90deg,#fff,#efefef);border-top:1px solid #c8c8c8;border-left:1px solid #d0d0d0"></div>
<svg class="a" style="left:705px;top:637px" width="5" height="9"><path d="M0 0v9L5 4.5z" fill="#444"/></svg>
<div class="a" style="left:717px;top:488px;width:1px;height:20px;background:repeating-linear-gradient(#aaa 0 1px,transparent 1px 3px)"></div>
<div class="a" style="left:719px;top:349px;width:536px;height:300px;background:#fff;border:1px solid #b8b8b8"></div>
<div class="a" style="left:720px;top:350px;width:534px;height:19px;background:#efefef"></div>
<div class="a" style="left:720px;top:350px;width:492px;height:19px;background:linear-gradient(#fafafa,#e9e9e9);border-bottom:1px solid #bdbdbd"></div>
<div class="a" style="left:974px;top:350px;width:1px;height:19px;background:#cfcfcf"></div>
<div class="a" style="left:1037px;top:350px;width:1px;height:19px;background:#cfcfcf"></div>
<div class="a" style="left:1101px;top:350px;width:1px;height:19px;background:#cfcfcf"></div>
<div class="t" style="left:740px;top:353.5px">Name</div>
<svg class="a" style="left:962px;top:357px" width="9" height="5"><path d="M0 0h9L4.5 4.5z" fill="#555"/></svg>
<div class="t" style="left:977px;top:353.5px">Size</div>
<div class="t" style="left:1040px;top:353.5px">Type</div>
<div class="t" style="left:1104px;top:353.5px">Date Modified</div>
<svg class="a" style="left:723px;top:371px" width="16" height="16" viewBox="0 0 16 16"><defs><linearGradient id="fg723371" x1="0" y1="0" x2="0" y2="1"><stop offset="0" stop-color="#d4e6f8"/><stop offset="1" stop-color="#9cc4ea"/></linearGradient></defs><path d="M0.5 1.5q0-1 1-1h4.5l1.5 2h7q1 0 1 1v11q0 1-1 1h-13q-1 0-1-1z" fill="#2f7ae0"/><path d="M0.5 4.5h15v10q0 1-1 1h-13q-1 0-1-1z" fill="url(#fg723371)" stroke="#4a8ee0" stroke-width="0.6"/></svg>
<div class="t" style="left:745px;top:373.2px">__pycache__</div>
<div class="t" style="left:1041px;top:373.2px">Folder</div>
<div class="t" style="left:1105px;top:373.2px">2/28/2...:53 PM</div>
<svg class="a" style="left:724px;top:389px" width="14" height="16"><path d="M1.5 0.5h8l3 3v12h-11z" fill="#f4f4f4" stroke="#d4d4d4"/><rect x="3" y="6" width="4" height="8" fill="#4fb870"/><rect x="3" y="9" width="4" height="5" fill="#3a8cd0"/><path d="M8 5h3M8 7h3M8 9h3M8 11h3" stroke="#aaa" stroke-width="0.8"/></svg>
<div class="t" style="left:745px;top:391.2px">template_main.ui</div>
<div class="t" style="left:975px;top:391.2px;width:60px;text-align:right;letter-spacing:0.3px">570...tes</div>
<div class="t" style="left:1041px;top:391.2px">ui File</div>
<div class="t" style="left:1105px;top:391.2px">2/28/2...:13 AM</div>
<div class="t" style="left:645px;top:659.8px">File <u>n</u>ame:</div>
<div class="a" style="left:728px;top:655px;width:441px;height:23px;background:#fff;border:1.5px solid #3a86cc;border-radius:3px"></div>
<div class="a" style="left:731px;top:659px;width:1px;height:15px;background:#111"></div>
<div class="a" style="left:1175px;top:655px;width:80px;height:24px;border:1px solid #cdcdcd;border-radius:3px;background:linear-gradient(#f7f7f7,#ececec)"></div>
<svg class="a" style="left:1188px;top:659px" width="16" height="16"><path d="M0.5 1.5q0-1 1-1h4l1.5 2h8v12.5h-14.5z" fill="#b4b4b4"/><path d="M0.5 4.5h15v10.5h-15z" fill="#dcdcdc" stroke="#c0c0c0" stroke-width="0.6"/></svg>
<div class="t" style="left:1206px;top:661px;color:#a8a8a8"><u>O</u>pen</div>
<div class="t" style="left:645px;top:690px">Files of type:</div>
<div class="a" style="left:728px;top:685px;width:441px;height:23px;border:1px solid #bdbdbd;border-radius:3px;background:linear-gradient(#fdfdfd,#ededed)"></div>
<div class="t" style="left:733px;top:690px">Designer UI files (*.ui)</div>
<svg class="a" style="left:1153px;top:695px" width="9" height="5"><path d="M0 0h9L4.5 4.5z" fill="#444"/></svg>
<div class="a" style="left:1175px;top:685px;width:80px;height:24px;border:1px solid #bdbdbd;border-radius:3px;background:linear-gradient(#fdfdfd,#ededed)"></div>
<svg class="a" style="left:1185px;top:691px" width="13" height="13"><circle cx="6.5" cy="6.5" r="5.8" fill="#e01010" stroke="#f0c0c0" stroke-width="1"/></svg>
<div class="t" style="left:1202px;top:690px;font-size:12.5px"><u>C</u>ancel</div>
<div class="a" style="left:1255px;top:708px;width:11px;height:12px;background:radial-gradient(circle,#bbb 0.6px,transparent 0.8px) 0 0/3px 3px;clip-path:polygon(100% 0,100% 100%,0 100%)"></div>
<!-- green selection rect -->
<div class="a" style="left:567px;top:295px;width:770px;height:182px;border:2px solid #44f800"></div>
<!-- ============ DOCK ============ -->
<div class="a" style="left:807px;top:1020px;width:306px;height:45px;background:#f5f4f2;border:1px solid #d8d6d2;border-radius:2px"></div>
<svg class="a" style="left:808px;top:1021px" width="304" height="40" viewBox="808 1021 304 40">
 <rect x="812" y="1025" width="41" height="40" rx="3" fill="#00a3da"/><rect x="812" y="1051" width="41" height="14" fill="#4b5a66"/>
 <rect x="860" y="1028" width="1.5" height="33" fill="#888"/>
 <rect x="869.5" y="1027.5" width="37" height="36" rx="3" fill="#dcdcdc" stroke="#d0d0d0"/>
 <rect x="872" y="1030" width="32" height="32" rx="2" fill="#263238"/>
 <path d="M875 1034l3 2.5-3 2.5" stroke="#fff" stroke-width="1.2" fill="none"/><path d="M879 1041h4" stroke="#fff" stroke-width="1.2"/>
 <rect x="922" y="1027" width="28" height="36" rx="2" fill="#00a5dc"/><path d="M922 1044h28" stroke="#0688b8" stroke-width="1.5"/>
 <rect x="931" y="1034" width="9" height="2" fill="#b0b0b0"/><rect x="931" y="1050" width="9" height="2" fill="#b0b0b0"/>
 <circle cx="984" cy="1045" r="21" fill="#5cc8f2"/>
 <path d="M972 1031q5-3 9 0q-2 4 1 7q-4 3-6 7q-4-1-6-5q-1-5 2-9z" fill="#1ea2da"/>
 <path d="M988 1026q8 1 13 7q-4 2-6 0q-3 3 0 6q-5 2-8-2q-2-4 1-11z" fill="#1ea2da"/>
 <path d="M992 1044q5-2 10 1q2 5-1 10q-5 2-7-3q-3-3-2-8z" fill="#1ea2da"/>
 <path d="M985 1039l-16 14l7 0.5l-4 8l4 2l4-8l5 5z" fill="#fff" stroke="#e0f4fc" stroke-width="0.8"/>
 <rect x="1014.5" y="1027.5" width="35" height="36" rx="3" fill="#dcdcdc"/>
 <g fill="#7fd2f4"><rect x="1017" y="1030" width="6" height="6"/><rect x="1025" y="1030" width="6" height="6"/><rect x="1033" y="1030" width="6" height="6"/><rect x="1041" y="1030" width="6" height="6"/><rect x="1041" y="1038" width="6" height="6"/><rect x="1017" y="1038" width="6" height="6"/><rect x="1017" y="1046" width="6" height="6"/><rect x="1017" y="1054" width="6" height="6"/><rect x="1025" y="1054" width="6" height="6"/></g>
 <circle cx="1031" cy="1042" r="8" fill="#cfeefc" stroke="#111" stroke-width="1.8"/><path d="M1037 1048l8 8" stroke="#111" stroke-width="3"/>
 <rect x="1059" y="1028" width="1.5" height="33" fill="#888"/>
 <defs><linearGradient id="dfg" x1="0" y1="0" x2="0" y2="1"><stop offset="0" stop-color="#8fb4e6"/><stop offset="1" stop-color="#4f84cf"/></linearGradient></defs>
 <path d="M1069 1030h13l3 3h14v28h-30z" fill="#6c6c6c"/><path d="M1071 1033h27v4h-27zM1071 1038h27v3h-27z" fill="#9a9a9a"/>
 <path d="M1068 1043q0-2 2-2h36q2 0 1.5 2l-3 15q-0.5 3-3 3h-31q-2 0-2.5-3z" fill="url(#dfg)" stroke="#3f6fb8" stroke-width="0.8"/>
</svg>
</body></html>
